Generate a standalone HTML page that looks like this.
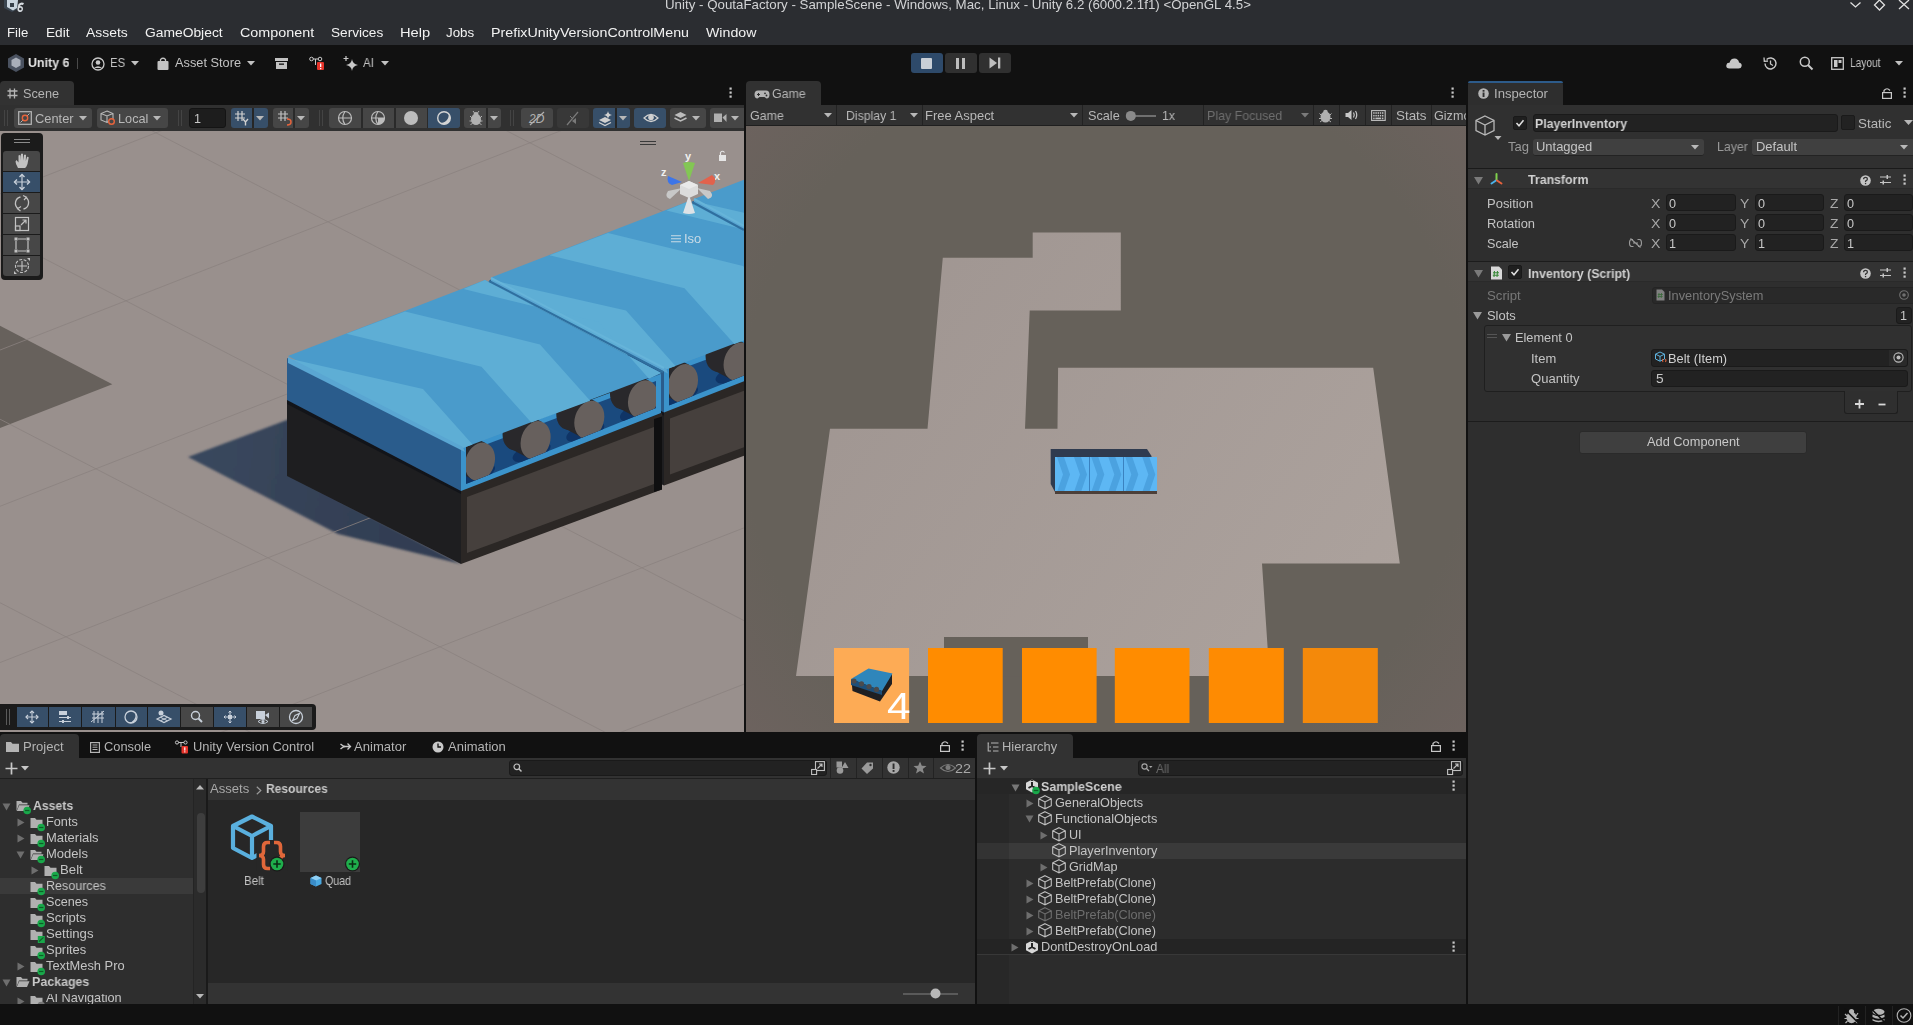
<!DOCTYPE html>
<html><head><meta charset="utf-8">
<style>
*{margin:0;padding:0;box-sizing:border-box}
html,body{width:1913px;height:1025px;overflow:hidden;background:#111;font-family:"Liberation Sans",sans-serif;font-size:12px;color:#c4c4c4}
.a{position:absolute}
.t{position:absolute;white-space:nowrap;line-height:1;transform-origin:0 0;will-change:transform}
svg.a{overflow:visible}
</style></head><body>
<div class="a" style="left:0px;top:0px;width:1913px;height:45px;background:#2b2d31;"></div>
<div class="t" style="left:665.14px;top:-2.00px;font-size:13.2px;color:#d2d3d5;transform:scaleX(1.009);">Unity - QoutaFactory - SampleScene - Windows, Mac, Linux - Unity 6.2 (6000.2.1f1) &lt;OpenGL 4.5&gt;</div>
<svg class="a" style="left:3px;top:0px;" width="22" height="14" viewBox="0 0 22 14"><path d="M1 0 L15 0 L15 9 L9 12 L1 8Z" fill="#3a4550"/><path d="M4 0 H15 L14 8 L10 10.5 L4 7Z" fill="#c9d5df"/><path d="M7 3 H11 V7 H7Z" fill="#37414b"/><path d="M15.5 4 Q18 1.5 21 3 L20 5 Q18 4 17 6 Q20 6 20 9 Q19.5 12.5 16.5 12 Q14 11.5 14.5 8Z" fill="#d8dde2"/><circle cx="17.3" cy="9" r="1.3" fill="#2b2d31"/></svg>
<div class="t" style="left:6.65px;top:26.00px;font-size:13px;color:#f2f2f2;transform:scaleX(1.013);">File</div>
<div class="t" style="left:45.65px;top:26.00px;font-size:13px;color:#f2f2f2;transform:scaleX(1.052);">Edit</div>
<div class="t" style="left:86.35px;top:26.00px;font-size:13px;color:#f2f2f2;transform:scaleX(1.069);">Assets</div>
<div class="t" style="left:144.65px;top:26.00px;font-size:13px;color:#f2f2f2;transform:scaleX(1.064);">GameObject</div>
<div class="t" style="left:239.55px;top:26.00px;font-size:13px;color:#f2f2f2;transform:scaleX(1.103);">Component</div>
<div class="t" style="left:330.55px;top:26.00px;font-size:13px;color:#f2f2f2;transform:scaleX(1.048);">Services</div>
<div class="t" style="left:399.55px;top:26.00px;font-size:13px;color:#f2f2f2;transform:scaleX(1.128);">Help</div>
<div class="t" style="left:445.55px;top:26.00px;font-size:13px;color:#f2f2f2;transform:scaleX(1.028);">Jobs</div>
<div class="t" style="left:490.65px;top:26.00px;font-size:13px;color:#f2f2f2;transform:scaleX(1.096);">PrefixUnityVersionControlMenu</div>
<div class="t" style="left:705.55px;top:26.00px;font-size:13px;color:#f2f2f2;transform:scaleX(1.090);">Window</div>
<svg class="a" style="left:1848px;top:0px;" width="65" height="12" viewBox="0 0 65 12"><path d="M2.5 2.5 L7.5 7 L12.5 2.5" stroke="#e0e0e0" stroke-width="1.3" fill="none"/><path d="M31.5 0 L36.5 5 L31.5 10 L26.5 5Z" stroke="#e0e0e0" stroke-width="1.3" fill="none"/><path d="M51 0 L61 9 M61 0 L51 9" stroke="#e0e0e0" stroke-width="1.3"/></svg>
<div class="a" style="left:0px;top:45px;width:1913px;height:36px;background:#111111;"></div>
<svg class="a" style="left:7px;top:53px;" width="18" height="20" viewBox="0 0 18 20"><path d="M9 1 L17 5.5 L17 14.5 L9 19 L1 14.5 L1 5.5Z" fill="#4a5260"/><path d="M9 4.5 L13.5 7 L13.5 12.5 L9 15 L4.5 12.5 L4.5 7Z" fill="#a9afba"/></svg>
<div class="t" style="left:27.57px;top:57.00px;font-size:12.6px;color:#e4e4e4;font-weight:700;transform:scaleX(0.987);">Unity 6</div>
<div class="a" style="left:77px;top:58px;width:1px;height:11px;background:#4a4a4a;"></div>
<svg class="a" style="left:91px;top:57px;" width="14" height="14" viewBox="0 0 14 14"><circle cx="7" cy="7" r="6" stroke="#c8c8c8" stroke-width="1.3" fill="none"/><circle cx="7" cy="5.5" r="2.3" fill="#c8c8c8"/><path d="M3 11 Q7 7.5 11 11" fill="#c8c8c8"/></svg>
<div class="t" style="left:109.77px;top:57.00px;font-size:12.6px;color:#c2c2c2;transform:scaleX(0.900);">ES</div>
<svg class="a" style="left:131px;top:61px;" width="8" height="5" viewBox="0 0 8 5"><path d="M0 0 L8 0 L4 4.5Z" fill="#c2c2c2"/></svg>
<svg class="a" style="left:157px;top:57px;" width="12" height="13" viewBox="0 0 12 13"><rect x="0.5" y="4" width="11" height="9" rx="1" fill="#c2c2c2"/><path d="M3.5 5 V2.5 Q6 0 8.5 2.5 V5" stroke="#c2c2c2" stroke-width="1.3" fill="none"/></svg>
<div class="t" style="left:174.57px;top:57.00px;font-size:12.6px;color:#c2c2c2;transform:scaleX(1.015);">Asset Store</div>
<svg class="a" style="left:247px;top:61px;" width="8" height="5" viewBox="0 0 8 5"><path d="M0 0 L8 0 L4 4.5Z" fill="#c2c2c2"/></svg>
<svg class="a" style="left:275px;top:58px;" width="13" height="11" viewBox="0 0 13 11"><rect x="0" y="0" width="13" height="3" fill="#c2c2c2"/><path d="M1 4 H12 V11 H1Z" fill="#c2c2c2"/><rect x="4" y="5.5" width="5" height="1.3" fill="#111"/></svg>
<svg class="a" style="left:309px;top:56px;" width="16" height="14" viewBox="0 0 16 14"><circle cx="2.5" cy="3" r="1.8" stroke="#c8c8c8" fill="none"/><circle cx="11" cy="3" r="1.8" stroke="#c8c8c8" fill="none"/><path d="M4 3 H9.5 M6.5 3 V9" stroke="#c8c8c8"/><rect x="8" y="6" width="7" height="8" rx="1" fill="#e5332a"/><rect x="11" y="7.5" width="1.3" height="3.5" fill="#fff"/><rect x="11" y="12" width="1.3" height="1.2" fill="#fff"/></svg>
<svg class="a" style="left:343px;top:56px;" width="16" height="15" viewBox="0 0 16 15"><path d="M9 3 Q9.5 8 15 9 Q9.5 10 9 15 Q8.5 10 3 9 Q8.5 8 9 3Z" fill="#c8c8c8"/><path d="M3 0 V5 M0.5 2.5 H5.5" stroke="#c8c8c8" stroke-width="1.2"/></svg>
<div class="t" style="left:362.77px;top:57.00px;font-size:12.6px;color:#c2c2c2;transform:scaleX(0.921);">AI</div>
<svg class="a" style="left:381px;top:61px;" width="8" height="5" viewBox="0 0 8 5"><path d="M0 0 L8 0 L4 4.5Z" fill="#c2c2c2"/></svg>
<div class="a" style="left:911px;top:53px;width:32px;height:20px;background:#2e4a6a;border-radius:3px"></div>
<div class="a" style="left:945px;top:53px;width:32px;height:20px;background:#303030;border-radius:3px"></div>
<div class="a" style="left:979px;top:53px;width:32px;height:20px;background:#303030;border-radius:3px"></div>
<div class="a" style="left:921px;top:57.5px;width:11px;height:11px;background:#c9cfd6;border-radius:1px"></div>
<div class="a" style="left:956px;top:57.5px;width:3px;height:11px;background:#bdbdbd;"></div>
<div class="a" style="left:962px;top:57.5px;width:3px;height:11px;background:#bdbdbd;"></div>
<svg class="a" style="left:989px;top:57px;" width="12" height="12" viewBox="0 0 12 12"><path d="M0.5 0.5 L8 6 L0.5 11.5Z" fill="#bdbdbd"/><rect x="9" y="0.5" width="2.3" height="11" fill="#bdbdbd"/></svg>
<svg class="a" style="left:1726px;top:57px;" width="16" height="12" viewBox="0 0 16 12"><path d="M3.5 11.5 Q0 11.5 0.3 8.2 Q0.8 5.5 3.5 5.8 Q4.5 1.5 8.5 1.5 Q12.5 1.8 13 5.5 Q16 6 15.7 9 Q15.2 11.5 12.5 11.5Z" fill="#c8c8c8"/></svg>
<svg class="a" style="left:1762px;top:56px;" width="16" height="15" viewBox="0 0 16 15"><path d="M3 7.5 A5.5 5.5 0 1 0 4.6 3.6" stroke="#c8c8c8" stroke-width="1.4" fill="none"/><path d="M2 1.5 L2.3 5.3 L6 5" stroke="#c8c8c8" stroke-width="1.3" fill="none"/><path d="M8.5 4.5 V8 L11 9.5" stroke="#c8c8c8" stroke-width="1.3" fill="none"/></svg>
<svg class="a" style="left:1799px;top:56px;" width="15" height="15" viewBox="0 0 15 15"><circle cx="5.8" cy="5.8" r="4.5" stroke="#c8c8c8" stroke-width="1.5" fill="none"/><path d="M9 9 L13.5 13.5" stroke="#c8c8c8" stroke-width="2"/></svg>
<svg class="a" style="left:1831px;top:57px;" width="13" height="13" viewBox="0 0 13 13"><rect x="0.7" y="0.7" width="11.6" height="11.6" stroke="#c8c8c8" stroke-width="1.3" fill="none"/><rect x="3" y="3" width="3.5" height="7" fill="#c8c8c8"/><rect x="7.5" y="3" width="3" height="3" fill="#c8c8c8"/></svg>
<div class="t" style="left:1849.87px;top:57.00px;font-size:12.6px;color:#c2c2c2;transform:scaleX(0.807);">Layout</div>
<svg class="a" style="left:1895px;top:61px;" width="8" height="5" viewBox="0 0 8 5"><path d="M0 0 L8 0 L4 4.5Z" fill="#c2c2c2"/></svg>
<div class="a" style="left:0px;top:81px;width:1913px;height:923px;background:#111111;"></div>
<div class="a" style="left:0px;top:1004px;width:1913px;height:21px;background:#111111;"></div>
<div class="a" style="left:0px;top:81px;width:74px;height:24px;background:#323232;border-radius:4px 4px 0 0"></div>
<svg class="a" style="left:7px;top:88px;" width="11" height="11" viewBox="0 0 11 11"><path d="M3 0.5 V10.5 M7.5 0.5 V10.5 M0.5 3 H10.5 M0.5 7.5 H10.5" stroke="#b4b4b4" stroke-width="1.3"/></svg>
<div class="t" style="left:22.57px;top:88.00px;font-size:12.6px;color:#b4b4b4;transform:scaleX(1.010);">Scene</div>
<svg class="a" style="left:729px;top:87px;" width="4" height="12" viewBox="0 0 4 12"><rect x="0.5" y="0.5" width="2.2" height="2.2" fill="#c8c8c8"/><rect x="0.5" y="4.5" width="2.2" height="2.2" fill="#c8c8c8"/><rect x="0.5" y="8.5" width="2.2" height="2.2" fill="#c8c8c8"/></svg>
<div class="a" style="left:0px;top:105px;width:744px;height:26px;background:#303030;"></div>
<div class="a" style="left:4px;top:110px;width:1px;height:16px;background:#444;"></div>
<div class="a" style="left:7px;top:110px;width:1px;height:16px;background:#444;"></div>
<div class="a" style="left:14px;top:108px;width:78px;height:20px;background:#464646;border-radius:3px"></div>
<svg class="a" style="left:18px;top:111px;" width="14" height="14" viewBox="0 0 14 14"><rect x="0.7" y="0.7" width="12.6" height="12.6" stroke="#b8b8b8" stroke-width="1.2" fill="none"/><path d="M2.5 11.5 L11.5 2.5" stroke="#b8b8b8" stroke-width="1"/><circle cx="7" cy="7" r="2.7" stroke="#e8643c" stroke-width="1.4" fill="#464646"/></svg>
<div class="t" style="left:34.87px;top:113.00px;font-size:12.6px;color:#b8b8b8;transform:scaleX(1.020);">Center</div>
<svg class="a" style="left:79px;top:116px;" width="8" height="5" viewBox="0 0 8 5"><path d="M0 0 L8 0 L4 4.5Z" fill="#b8b8b8"/></svg>
<div class="a" style="left:97px;top:108px;width:71px;height:20px;background:#464646;border-radius:3px"></div>
<svg class="a" style="left:100px;top:110px;" width="16" height="16" viewBox="0 0 16 16"><path d="M7 1 L13 3.5 L13 10 L7 12.5 L1 10 L1 3.5Z M1 3.5 L7 6 L13 3.5 M7 6 V12.5" stroke="#b8b8b8" stroke-width="1.1" fill="none"/><circle cx="11.5" cy="11.5" r="2.8" stroke="#e8643c" stroke-width="1.4" fill="#464646"/></svg>
<div class="t" style="left:117.67px;top:113.00px;font-size:12.6px;color:#b8b8b8;transform:scaleX(1.009);">Local</div>
<svg class="a" style="left:153px;top:116px;" width="8" height="5" viewBox="0 0 8 5"><path d="M0 0 L8 0 L4 4.5Z" fill="#b8b8b8"/></svg>
<div class="a" style="left:178px;top:110px;width:1px;height:16px;background:#444;"></div>
<div class="a" style="left:181px;top:110px;width:1px;height:16px;background:#444;"></div>
<div class="a" style="left:189px;top:108px;width:37px;height:20px;background:#1d1d1d;border-radius:3px;border:1px solid #141414"></div>
<div class="t" style="left:193.87px;top:113.00px;font-size:12.6px;color:#c8c8c8;">1</div>
<div class="a" style="left:231px;top:108px;width:37px;height:20px;background:#374f69;border-radius:3px"></div>
<div class="a" style="left:252px;top:108px;width:1.5px;height:20px;background:#262626;"></div>
<svg class="a" style="left:234px;top:110px;" width="16" height="16" viewBox="0 0 16 16"><path d="M4 1 V11 M8 1 V11 M1 4 H11 M1 8 H11" stroke="#d0d0d0" stroke-width="1.2"/><path d="M9 9 L11.5 12 L14 9 M11.5 12 V15.5" stroke="#d0d0d0" stroke-width="1.4" fill="none"/></svg>
<svg class="a" style="left:256px;top:116px;" width="8" height="5" viewBox="0 0 8 5"><path d="M0 0 L8 0 L4 4.5Z" fill="#b8b8b8"/></svg>
<div class="a" style="left:273px;top:108px;width:36px;height:20px;background:#464646;border-radius:3px"></div>
<div class="a" style="left:293px;top:108px;width:1.5px;height:20px;background:#2a2a2a;"></div>
<svg class="a" style="left:277px;top:110px;" width="16" height="16" viewBox="0 0 16 16"><path d="M4 1 V11 M8 1 V11 M1 4 H11 M1 8 H11" stroke="#c0c0c0" stroke-width="1.2"/><path d="M10 9 Q14 9 14 12 Q14 15 10 15" stroke="#e8643c" stroke-width="1.5" fill="none"/></svg>
<svg class="a" style="left:297px;top:116px;" width="8" height="5" viewBox="0 0 8 5"><path d="M0 0 L8 0 L4 4.5Z" fill="#b8b8b8"/></svg>
<div class="a" style="left:319px;top:110px;width:1px;height:16px;background:#444;"></div>
<div class="a" style="left:322px;top:110px;width:1px;height:16px;background:#444;"></div>
<div class="a" style="left:329px;top:108px;width:131px;height:20px;background:#464646;border-radius:3px"></div>
<div class="a" style="left:361px;top:108px;width:1.5px;height:20px;background:#2a2a2a;"></div>
<div class="a" style="left:394px;top:108px;width:1.5px;height:20px;background:#2a2a2a;"></div>
<div class="a" style="left:427px;top:108px;width:1.5px;height:20px;background:#2a2a2a;"></div>
<div class="a" style="left:428px;top:108px;width:32px;height:20px;background:#374f69;border-radius:0 3px 3px 0"></div>
<svg class="a" style="left:337px;top:110px;" width="16" height="16" viewBox="0 0 16 16"><circle cx="8" cy="8" r="6.5" stroke="#bcbcbc" stroke-width="1.2" fill="none"/><path d="M1.5 8 H14.5 M8 1.5 Q3.5 8 8 14.5" stroke="#bcbcbc" stroke-width="1.2" fill="none"/></svg>
<svg class="a" style="left:370px;top:110px;" width="16" height="16" viewBox="0 0 16 16"><circle cx="8" cy="8" r="6.5" stroke="#bcbcbc" stroke-width="1.2" fill="none"/><path d="M14.5 8 A6.5 6.5 0 0 1 8 14.5 Q11 11 11 8Z" fill="#bcbcbc"/><path d="M8 14.5 A6.5 6.5 0 0 0 14.5 8 H8Z" fill="#bcbcbc"/><path d="M1.5 8 H14.5 M8 1.5 Q3.5 8 8 14.5" stroke="#bcbcbc" stroke-width="1.2" fill="none"/></svg>
<svg class="a" style="left:403px;top:110px;" width="16" height="16" viewBox="0 0 16 16"><circle cx="8" cy="8" r="7" fill="#bcbcbc"/></svg>
<svg class="a" style="left:436px;top:110px;" width="16" height="16" viewBox="0 0 16 16"><circle cx="8" cy="8" r="6.3" stroke="#d4d4d4" stroke-width="1.4" fill="none"/><path d="M12.5 3.5 A6.3 6.3 0 0 1 3.5 12.5 A7.5 7.5 0 0 0 12.5 3.5Z" fill="#d4d4d4"/></svg>
<div class="a" style="left:464px;top:108px;width:37px;height:20px;background:#464646;border-radius:3px"></div>
<div class="a" style="left:486px;top:108px;width:1.5px;height:20px;background:#2a2a2a;"></div>
<svg class="a" style="left:468px;top:110px;" width="16" height="16" viewBox="0 0 16 16"><ellipse cx="8" cy="9.5" rx="5" ry="5.5" fill="#b0b0b0"/><circle cx="8" cy="4.5" r="2.5" fill="#b0b0b0"/><path d="M2 6 L4 8 M14 6 L12 8 M1.5 11 H4 M14.5 11 H12 M2.5 15 L4.5 13 M13.5 15 L11.5 13 M5 1 L6.5 3 M11 1 L9.5 3" stroke="#b0b0b0" stroke-width="1"/></svg>
<svg class="a" style="left:490px;top:116px;" width="8" height="5" viewBox="0 0 8 5"><path d="M0 0 L8 0 L4 4.5Z" fill="#b8b8b8"/></svg>
<div class="a" style="left:510px;top:110px;width:1px;height:16px;background:#444;"></div>
<div class="a" style="left:513px;top:110px;width:1px;height:16px;background:#444;"></div>
<div class="a" style="left:521px;top:108px;width:32px;height:20px;background:#464646;border-radius:3px"></div>
<svg class="a" style="left:527px;top:110px;" width="20" height="16" viewBox="0 0 20 16"><text x="2" y="13" font-size="12" font-family="Liberation Sans" fill="#b0b0b0" font-style="italic">2D</text><path d="M3 15 L17 2" stroke="#b0b0b0" stroke-width="1.2"/></svg>
<div class="a" style="left:557px;top:108px;width:32px;height:20px;background:#383838;border-radius:3px"></div>
<svg class="a" style="left:565px;top:110px;" width="16" height="16" viewBox="0 0 16 16"><path d="M2 15 L13 2" stroke="#7a7a7a" stroke-width="1.2"/><path d="M11 8 L7 11 L11 14Z" fill="#7a7a7a"/><path d="M5 6 L8 9" stroke="#7a7a7a"/></svg>
<div class="a" style="left:593px;top:108px;width:37px;height:20px;background:#374f69;border-radius:3px"></div>
<div class="a" style="left:615px;top:108px;width:1.5px;height:20px;background:#262626;"></div>
<svg class="a" style="left:598px;top:110px;" width="16" height="16" viewBox="0 0 16 16"><path d="M1 10 L7 7 L13 10 L7 13Z" fill="#d0d0d0"/><path d="M1 12.5 L7 15.5 L13 12.5" stroke="#d0d0d0" stroke-width="1.3" fill="none"/><path d="M10 1 Q10.5 4.5 14 5 Q10.5 5.5 10 9 Q9.5 5.5 6 5 Q9.5 4.5 10 1Z" fill="#d0d0d0"/></svg>
<svg class="a" style="left:619px;top:116px;" width="8" height="5" viewBox="0 0 8 5"><path d="M0 0 L8 0 L4 4.5Z" fill="#b8b8b8"/></svg>
<div class="a" style="left:634px;top:108px;width:32px;height:20px;background:#374f69;border-radius:3px"></div>
<svg class="a" style="left:643px;top:112px;" width="16" height="12" viewBox="0 0 16 12"><path d="M1 6 Q8 -1 15 6 Q8 13 1 6Z" stroke="#d0d0d0" stroke-width="1.2" fill="none"/><circle cx="8" cy="5.5" r="2.8" fill="#d0d0d0"/></svg>
<div class="a" style="left:670px;top:108px;width:36px;height:20px;background:#464646;border-radius:3px"></div>
<svg class="a" style="left:674px;top:111px;" width="13" height="12" viewBox="0 0 13 12"><path d="M0.5 4 L6.5 1 L12.5 4 L6.5 7Z" fill="#bcbcbc"/><path d="M0.5 7 L6.5 10 L12.5 7" stroke="#bcbcbc" stroke-width="1.5" fill="none"/></svg>
<svg class="a" style="left:692px;top:116px;" width="8" height="5" viewBox="0 0 8 5"><path d="M0 0 L8 0 L4 4.5Z" fill="#b8b8b8"/></svg>
<div class="a" style="left:710px;top:108px;width:34px;height:20px;background:#464646;border-radius:3px 0 0 3px"></div>
<svg class="a" style="left:714px;top:113px;" width="13" height="10" viewBox="0 0 13 10"><rect x="0" y="0.5" width="8" height="8.5" fill="#b0b0b0"/><path d="M8.5 4.5 L12.5 1 V9Z" fill="#b0b0b0"/></svg>
<svg class="a" style="left:731px;top:116px;" width="8" height="5" viewBox="0 0 8 5"><path d="M0 0 L8 0 L4 4.5Z" fill="#b8b8b8"/></svg>
<svg class="a" style="left:0;top:131px;overflow:hidden" width="744" height="601" viewBox="0 131 744 601"><rect x="0" y="131" width="744" height="601" fill="#99908d"/><polygon points="0.0,325.7 112.3,384.2 0.0,427.9" fill="#67615c"/><defs><filter id="shb" x="-5%" y="-5%" width="110%" height="110%"><feGaussianBlur stdDeviation="0.9"/></filter><linearGradient id="shg" x1="188" y1="457" x2="400" y2="480" gradientUnits="userSpaceOnUse"><stop offset="0" stop-color="#3a485e"/><stop offset="1" stop-color="#323e53"/></linearGradient></defs><polygon points="188.0,457.0 300.0,415.0 300.0,480.0 461.0,564.0 338.0,534.0" fill="url(#shg)" filter="url(#shb)"/><path d="M-2118.1,240.8 L305.9,-707.2 M-1946.1,329.8 L477.9,-618.2 M-1774.1,418.8 L649.9,-529.2 M-1602.1,507.8 L821.9,-440.2 M-1430.1,596.8 L993.9,-351.2 M-1258.1,685.8 L1165.9,-262.2 M-1086.1,774.8 L1337.9,-173.2 M-914.1,863.8 L1509.9,-84.2 M-742.1,952.8 L1681.9,4.8 M-570.1,1041.8 L1853.9,93.8 M-398.1,1130.8 L2025.9,182.8 M-226.1,1219.8 L2197.9,271.8 M-54.1,1308.8 L2369.9,360.8 M117.9,1397.8 L2541.9,449.8 M-2118.1,240.8 L-54.1,1308.8 M-1916.1,161.8 L147.9,1229.8 M-1714.1,82.8 L349.9,1150.8 M-1512.1,3.8 L551.9,1071.8 M-1310.1,-75.2 L753.9,992.8 M-1108.1,-154.2 L955.9,913.8 M-906.1,-233.2 L1157.9,834.8 M-704.1,-312.2 L1359.9,755.8 M-502.1,-391.2 L1561.9,676.8 M-300.1,-470.2 L1763.9,597.8 M-98.1,-549.2 L1965.9,518.8 M103.9,-628.2 L2167.9,439.8 M305.9,-707.2 L2369.9,360.8 M507.9,-786.2 L2571.9,281.8" stroke="#8a827f" stroke-width="0.8" fill="none"/><polygon points="693.0,240.0 867.0,330.0 867.0,407.0 693.0,319.0" fill="#1e1e20"/><polygon points="693.0,242.0 867.0,332.0 867.0,337.0 693.0,247.0" fill="#121419"/><polygon points="867.0,332.0 1068.0,256.0 1068.0,332.5 867.0,407.0" fill="#2b2725"/><polygon points="873.0,340.0 1060.0,270.0 1060.0,327.0 873.0,396.0" fill="#46403d"/><polygon points="1060.0,262.0 1068.0,259.6 1068.0,332.5 1060.0,335.0" fill="#0f0f10"/><polygon points="693.0,201.0 871.0,289.0 867.0,334.0 693.0,243.0" fill="#2a5c8c"/><polygon points="867.0,291.0 1067.0,217.0 1067.0,256.0 867.0,334.0" fill="#3b93cb"/><polygon points="872.0,295.0 1062.0,224.0 1062.0,251.0 872.0,327.0" fill="#1a4a7e"/><clipPath id="clip406"><polygon points="872.0,283.0 1062.0,212.0 1062.0,251.0 872.0,327.0"/></clipPath><g clip-path="url(#clip406)"><ellipse cx="882.0" cy="316.7" rx="20" ry="8" transform="rotate(-20 882.0 316.7)" fill="#0f3466"/><polygon points="892.0,286.2 874.0,277.2 862.0,313.7 880.0,323.2" fill="#29282b"/><ellipse cx="868.0" cy="295.7" rx="14.5" ry="19.5" transform="rotate(18 868.0 295.7)" fill="#29282b"/><ellipse cx="886.0" cy="304.7" rx="14.5" ry="19.5" transform="rotate(18 886.0 304.7)" fill="#67605d"/><ellipse cx="937.6" cy="295.2" rx="20" ry="8" transform="rotate(-20 937.6 295.2)" fill="#0f3466"/><polygon points="947.6,264.7 929.6,255.7 917.6,292.2 935.6,301.7" fill="#29282b"/><ellipse cx="923.6" cy="274.2" rx="14.5" ry="19.5" transform="rotate(18 923.6 274.2)" fill="#29282b"/><ellipse cx="941.6" cy="283.2" rx="14.5" ry="19.5" transform="rotate(18 941.6 283.2)" fill="#67605d"/><ellipse cx="991.3" cy="274.8" rx="20" ry="8" transform="rotate(-20 991.3 274.8)" fill="#0f3466"/><polygon points="1001.3,244.3 983.3,235.3 971.3,271.8 989.3,281.3" fill="#29282b"/><ellipse cx="977.3" cy="253.8" rx="14.5" ry="19.5" transform="rotate(18 977.3 253.8)" fill="#29282b"/><ellipse cx="995.3" cy="262.8" rx="14.5" ry="19.5" transform="rotate(18 995.3 262.8)" fill="#67605d"/><ellipse cx="1045.0" cy="254.3" rx="20" ry="8" transform="rotate(-20 1045.0 254.3)" fill="#0f3466"/><polygon points="1055.0,223.8 1037.0,214.8 1025.0,251.3 1043.0,260.8" fill="#29282b"/><ellipse cx="1031.0" cy="233.3" rx="14.5" ry="19.5" transform="rotate(18 1031.0 233.3)" fill="#29282b"/><ellipse cx="1049.0" cy="242.3" rx="14.5" ry="19.5" transform="rotate(18 1049.0 242.3)" fill="#67605d"/></g><polygon points="694.0,199.0 891.0,123.0 1067.0,216.0 869.0,291.0" fill="#4a9bcb"/><polygon points="694.0,201.0 869.0,291.0 878.5,287.5 829.0,232.0 697.0,202.0" fill="#5eaed5"/><polygon points="752.5,176.7 887.5,209.7 937.3,265.6 996.2,243.7 946.0,187.4 811.0,154.4" fill="#5eaed5"/><polygon points="869.5,132.1 1004.5,165.1 1055.0,221.8 1067.0,216.0 891.0,123.0" fill="#5eaed5"/><polygon points="694.0,200.0 869.0,290.0 871.0,295.0 694.0,206.0" fill="#5aa6d2"/><polygon points="490.0,318.5 664.0,408.5 664.0,485.5 490.0,397.5" fill="#1e1e20"/><polygon points="490.0,320.5 664.0,410.5 664.0,415.5 490.0,325.5" fill="#121419"/><polygon points="664.0,410.5 865.0,334.5 865.0,411.0 664.0,485.5" fill="#2b2725"/><polygon points="670.0,418.5 857.0,348.5 857.0,405.5 670.0,474.5" fill="#46403d"/><polygon points="857.0,340.5 865.0,338.1 865.0,411.0 857.0,413.5" fill="#0f0f10"/><polygon points="490.0,279.5 668.0,367.5 664.0,412.5 490.0,321.5" fill="#2a5c8c"/><polygon points="664.0,369.5 864.0,295.5 864.0,334.5 664.0,412.5" fill="#3b93cb"/><polygon points="669.0,373.5 859.0,302.5 859.0,329.5 669.0,405.5" fill="#1a4a7e"/><clipPath id="clip203"><polygon points="669.0,361.5 859.0,290.5 859.0,329.5 669.0,405.5"/></clipPath><g clip-path="url(#clip203)"><ellipse cx="679.0" cy="395.2" rx="20" ry="8" transform="rotate(-20 679.0 395.2)" fill="#0f3466"/><polygon points="689.0,364.7 671.0,355.7 659.0,392.2 677.0,401.7" fill="#29282b"/><ellipse cx="665.0" cy="374.2" rx="14.5" ry="19.5" transform="rotate(18 665.0 374.2)" fill="#29282b"/><ellipse cx="683.0" cy="383.2" rx="14.5" ry="19.5" transform="rotate(18 683.0 383.2)" fill="#67605d"/><ellipse cx="734.6" cy="373.7" rx="20" ry="8" transform="rotate(-20 734.6 373.7)" fill="#0f3466"/><polygon points="744.6,343.2 726.6,334.2 714.6,370.7 732.6,380.2" fill="#29282b"/><ellipse cx="720.6" cy="352.7" rx="14.5" ry="19.5" transform="rotate(18 720.6 352.7)" fill="#29282b"/><ellipse cx="738.6" cy="361.7" rx="14.5" ry="19.5" transform="rotate(18 738.6 361.7)" fill="#67605d"/><ellipse cx="788.3" cy="353.3" rx="20" ry="8" transform="rotate(-20 788.3 353.3)" fill="#0f3466"/><polygon points="798.3,322.8 780.3,313.8 768.3,350.3 786.3,359.8" fill="#29282b"/><ellipse cx="774.3" cy="332.3" rx="14.5" ry="19.5" transform="rotate(18 774.3 332.3)" fill="#29282b"/><ellipse cx="792.3" cy="341.3" rx="14.5" ry="19.5" transform="rotate(18 792.3 341.3)" fill="#67605d"/><ellipse cx="842.0" cy="332.8" rx="20" ry="8" transform="rotate(-20 842.0 332.8)" fill="#0f3466"/><polygon points="852.0,302.3 834.0,293.3 822.0,329.8 840.0,339.3" fill="#29282b"/><ellipse cx="828.0" cy="311.8" rx="14.5" ry="19.5" transform="rotate(18 828.0 311.8)" fill="#29282b"/><ellipse cx="846.0" cy="320.8" rx="14.5" ry="19.5" transform="rotate(18 846.0 320.8)" fill="#67605d"/></g><polygon points="491.0,277.5 688.0,201.5 864.0,294.5 666.0,369.5" fill="#4a9bcb"/><polygon points="491.0,279.5 666.0,369.5 675.5,366.0 626.0,310.5 494.0,280.5" fill="#5eaed5"/><polygon points="549.5,255.2 684.5,288.2 734.3,344.1 793.2,322.2 743.0,265.9 608.0,232.9" fill="#5eaed5"/><polygon points="666.5,210.6 801.5,243.6 852.0,300.3 864.0,294.5 688.0,201.5" fill="#5eaed5"/><polygon points="491.0,278.5 666.0,368.5 668.0,373.5 491.0,284.5" fill="#5aa6d2"/><polygon points="287.0,397.0 461.0,487.0 461.0,564.0 287.0,476.0" fill="#1e1e20"/><polygon points="287.0,399.0 461.0,489.0 461.0,494.0 287.0,404.0" fill="#121419"/><polygon points="461.0,489.0 662.0,413.0 662.0,489.5 461.0,564.0" fill="#2b2725"/><polygon points="467.0,497.0 654.0,427.0 654.0,484.0 467.0,553.0" fill="#46403d"/><polygon points="654.0,419.0 662.0,416.6 662.0,489.5 654.0,492.0" fill="#0f0f10"/><polygon points="287.0,358.0 465.0,446.0 461.0,491.0 287.0,400.0" fill="#2a5c8c"/><polygon points="461.0,448.0 661.0,374.0 661.0,413.0 461.0,491.0" fill="#3b93cb"/><polygon points="466.0,452.0 656.0,381.0 656.0,408.0 466.0,484.0" fill="#1a4a7e"/><clipPath id="clip0"><polygon points="466.0,440.0 656.0,369.0 656.0,408.0 466.0,484.0"/></clipPath><g clip-path="url(#clip0)"><ellipse cx="476.0" cy="473.7" rx="20" ry="8" transform="rotate(-20 476.0 473.7)" fill="#0f3466"/><polygon points="486.0,443.2 468.0,434.2 456.0,470.7 474.0,480.2" fill="#29282b"/><ellipse cx="462.0" cy="452.7" rx="14.5" ry="19.5" transform="rotate(18 462.0 452.7)" fill="#29282b"/><ellipse cx="480.0" cy="461.7" rx="14.5" ry="19.5" transform="rotate(18 480.0 461.7)" fill="#67605d"/><ellipse cx="531.6" cy="452.2" rx="20" ry="8" transform="rotate(-20 531.6 452.2)" fill="#0f3466"/><polygon points="541.6,421.7 523.6,412.7 511.6,449.2 529.6,458.7" fill="#29282b"/><ellipse cx="517.6" cy="431.2" rx="14.5" ry="19.5" transform="rotate(18 517.6 431.2)" fill="#29282b"/><ellipse cx="535.6" cy="440.2" rx="14.5" ry="19.5" transform="rotate(18 535.6 440.2)" fill="#67605d"/><ellipse cx="585.3" cy="431.8" rx="20" ry="8" transform="rotate(-20 585.3 431.8)" fill="#0f3466"/><polygon points="595.3,401.3 577.3,392.3 565.3,428.8 583.3,438.3" fill="#29282b"/><ellipse cx="571.3" cy="410.8" rx="14.5" ry="19.5" transform="rotate(18 571.3 410.8)" fill="#29282b"/><ellipse cx="589.3" cy="419.8" rx="14.5" ry="19.5" transform="rotate(18 589.3 419.8)" fill="#67605d"/><ellipse cx="639.0" cy="411.3" rx="20" ry="8" transform="rotate(-20 639.0 411.3)" fill="#0f3466"/><polygon points="649.0,380.8 631.0,371.8 619.0,408.3 637.0,417.8" fill="#29282b"/><ellipse cx="625.0" cy="390.3" rx="14.5" ry="19.5" transform="rotate(18 625.0 390.3)" fill="#29282b"/><ellipse cx="643.0" cy="399.3" rx="14.5" ry="19.5" transform="rotate(18 643.0 399.3)" fill="#67605d"/></g><polygon points="288.0,356.0 485.0,280.0 661.0,373.0 463.0,448.0" fill="#4a9bcb"/><polygon points="288.0,358.0 463.0,448.0 472.5,444.5 423.0,389.0 291.0,359.0" fill="#5eaed5"/><polygon points="346.5,333.7 481.5,366.7 531.3,422.6 590.2,400.7 540.0,344.4 405.0,311.4" fill="#5eaed5"/><polygon points="463.5,289.1 598.5,322.1 649.0,378.8 661.0,373.0 485.0,280.0" fill="#5eaed5"/><polygon points="288.0,357.0 463.0,447.0 465.0,452.0 288.0,363.0" fill="#5aa6d2"/><path d="M489,281 L663,372 M692,202 L744,230" stroke="#2f6f9f" stroke-width="2" fill="none"/><path d="M491,278 L664,368 M694,199 L744,226" stroke="#66b4d9" stroke-width="2" fill="none"/></svg>
<div class="a" style="left:1px;top:133px;width:42px;height:147px;background:#1b1b1b;border-radius:4px"></div>
<div class="a" style="left:14px;top:139px;width:16px;height:1px;background:#8a8a8a;"></div>
<div class="a" style="left:14px;top:142px;width:16px;height:1px;background:#8a8a8a;"></div>
<div class="a" style="left:3px;top:151px;width:37px;height:20px;background:#474747;border-radius:3px 3px 0 0"></div>
<div class="a" style="left:3px;top:172px;width:37px;height:20px;background:#374f69;"></div>
<div class="a" style="left:3px;top:193px;width:37px;height:20px;background:#474747;"></div>
<div class="a" style="left:3px;top:214px;width:37px;height:20px;background:#474747;"></div>
<div class="a" style="left:3px;top:235px;width:37px;height:20px;background:#474747;"></div>
<div class="a" style="left:3px;top:256px;width:37px;height:20px;background:#474747;border-radius:0 0 3px 3px"></div>
<svg class="a" style="left:13px;top:152px;" width="18" height="18" viewBox="0 0 18 18"><path d="M5 16 Q2.5 12 2.5 9.5 L3.5 8 L5.5 10.5 L5.5 3.5 Q6.5 2.5 7.5 3.5 L7.5 8.5 L8 2 Q9 1 10 2 L10 8.5 L11 3 Q12 2 13 3 L12.8 9 L14 5 Q15 4.5 15.7 5.5 L14.5 12 Q13.5 15 12 16Z" fill="#c2c2c2"/></svg>
<svg class="a" style="left:13px;top:173px;" width="18" height="18" viewBox="0 0 18 18"><path d="M9 1.5 V16.5 M1.5 9 H16.5" stroke="#c8d0da" stroke-width="1.2"/><path d="M6.5 4 L9 1.5 L11.5 4 M6.5 14 L9 16.5 L11.5 14 M4 6.5 L1.5 9 L4 11.5 M14 6.5 L16.5 9 L14 11.5" stroke="#c8d0da" stroke-width="1.4" fill="none"/></svg>
<svg class="a" style="left:13px;top:194px;" width="18" height="18" viewBox="0 0 18 18"><path d="M7.5 3 A6.5 6.5 0 0 0 5 14.5 M10.5 15 A6.5 6.5 0 0 0 13 3.5" stroke="#c2c2c2" stroke-width="1.3" fill="none"/><path d="M10 1.5 L13.5 3.2 L11 6 M8 12.5 L4.5 14.8 L7.5 17" stroke="#c2c2c2" stroke-width="1.2" fill="none"/></svg>
<svg class="a" style="left:13px;top:215px;" width="18" height="18" viewBox="0 0 18 18"><rect x="2.5" y="2.5" width="13" height="13" stroke="#c2c2c2" stroke-width="1.2" fill="none"/><rect x="2.5" y="11" width="4.5" height="4.5" stroke="#c2c2c2" stroke-width="1.2" fill="none"/><path d="M8 10 L13 5 M9.5 5 H13 V8.5" stroke="#c2c2c2" stroke-width="1.2" fill="none"/></svg>
<svg class="a" style="left:13px;top:236px;" width="18" height="18" viewBox="0 0 18 18"><path d="M5 3 H13 M5 15 H13 M3 5 V13 M15 5 V13" stroke="#c2c2c2" stroke-width="1.2"/><rect x="1.5" y="1.5" width="3" height="3" fill="#c2c2c2"/><rect x="13.5" y="1.5" width="3" height="3" fill="#c2c2c2"/><rect x="1.5" y="13.5" width="3" height="3" fill="#c2c2c2"/><rect x="13.5" y="13.5" width="3" height="3" fill="#c2c2c2"/></svg>
<svg class="a" style="left:13px;top:257px;" width="18" height="18" viewBox="0 0 18 18"><circle cx="9" cy="9" r="6.5" stroke="#c2c2c2" stroke-width="1.1" fill="none" stroke-dasharray="3 1.5"/><path d="M9 4 V14 M4 9 H14" stroke="#c2c2c2" stroke-width="1.1"/><path d="M1 17 L4 17 L1 14Z M17 1 L14 1 L17 4Z" fill="#c2c2c2"/></svg>
<div class="a" style="left:640px;top:141px;width:16px;height:1px;background:#3a3a3a;"></div>
<div class="a" style="left:640px;top:144px;width:16px;height:1px;background:#3a3a3a;"></div>
<svg class="a" style="left:655px;top:146px;" width="75" height="72" viewBox="0 0 75 72">
<text x="30" y="14" font-size="11" font-weight="700" fill="#f0f0f0" font-family="Liberation Sans">y</text>
<text x="6" y="30" font-size="11" font-weight="700" fill="#f0f0f0" font-family="Liberation Sans">z</text>
<text x="59" y="34" font-size="11" font-weight="700" fill="#f0f0f0" font-family="Liberation Sans">x</text>
<path d="M28 17 Q34 15 40 17 L34 35Z" fill="#83c654"/>
<path d="M13 30 Q11 37 17 39 L27 36Z" fill="#3d75e8"/>
<path d="M57 29 Q63 34 58 39 L43 37Z" fill="#e2624c"/>
<path d="M13 45 Q9 51 15 53 L27 42Z" fill="#c8c8c8"/>
<path d="M55 45 Q60 51 53 53 L42 42Z" fill="#c8c8c8"/>
<path d="M28 67 Q34 69 40 67 L34 49Z" fill="#dde2e6"/>
<path d="M34 35 L43 39 L43 48 L34 52 L25 48 L25 39Z" fill="#dcdcdc"/>
<path d="M34 35 L43 39 L34 43 L25 39Z" fill="#e9e9e9"/>
<rect x="64" y="9" width="7" height="6" fill="#e6e6e6"/><path d="M65.5 9 V6.5 Q67.5 4 69.5 6.5" stroke="#e6e6e6" stroke-width="1.2" fill="none"/>
</svg>
<svg class="a" style="left:671px;top:235px;" width="11" height="8" viewBox="0 0 11 8"><path d="M0 0.7 H10 M0 3.7 H10 M0 6.7 H10" stroke="#c9dbe6" stroke-width="1.1"/></svg>
<div class="t" style="left:684.37px;top:233.00px;font-size:12.6px;color:#c9dbe6;transform:scaleX(1.029);">Iso</div>
<div class="a" style="left:0px;top:704px;width:316px;height:26px;background:#1b1b1b;border-radius:0 4px 4px 0"></div>
<div class="a" style="left:6px;top:709px;width:1px;height:16px;background:#5a5a5a;"></div>
<div class="a" style="left:9px;top:709px;width:1px;height:16px;background:#5a5a5a;"></div>
<div class="a" style="left:16.5px;top:707px;width:31.5px;height:20px;background:#374f69;"></div>
<div class="a" style="left:49px;top:707px;width:32px;height:20px;background:#374f69;"></div>
<div class="a" style="left:82px;top:707px;width:32.5px;height:20px;background:#374f69;"></div>
<div class="a" style="left:115.5px;top:707px;width:31.5px;height:20px;background:#374f69;"></div>
<div class="a" style="left:148px;top:707px;width:31.5px;height:20px;background:#374f69;"></div>
<div class="a" style="left:181px;top:707px;width:32px;height:20px;background:#474747;"></div>
<div class="a" style="left:214px;top:707px;width:32px;height:20px;background:#374f69;"></div>
<div class="a" style="left:247px;top:707px;width:32px;height:20px;background:#474747;"></div>
<div class="a" style="left:280px;top:707px;width:32px;height:20px;background:#474747;"></div>
<svg class="a" style="left:23px;top:709px;" width="18" height="16" viewBox="0 0 18 16"><path d="M9 2 V14 M3 8 H15" stroke="#c8d0da" stroke-width="1.1"/><path d="M7 4 L9 2 L11 4 M7 12 L9 14 L11 12 M5 6 L3 8 L5 10 M13 6 L15 8 L13 10" stroke="#c8d0da" stroke-width="1.2" fill="none"/></svg>
<svg class="a" style="left:56px;top:709px;" width="18" height="16" viewBox="0 0 18 16"><rect x="3" y="2" width="8" height="4" fill="#c8d0da"/><path d="M3 8.5 H15 M3 12.5 H15" stroke="#c8d0da" stroke-width="1.2"/><rect x="11" y="7" width="2" height="3" fill="#c8d0da"/><rect x="6" y="11" width="2" height="3" fill="#c8d0da"/></svg>
<svg class="a" style="left:89px;top:709px;" width="18" height="16" viewBox="0 0 18 16"><path d="M3 5 H15 M3 9 H15 M5 2 V14 M9 2 V14 M13 2 V14 M2 13 L15 2" stroke="#c8d0da" stroke-width="1"/></svg>
<svg class="a" style="left:122px;top:709px;" width="18" height="16" viewBox="0 0 18 16"><circle cx="9" cy="8" r="6" stroke="#c8d0da" stroke-width="1.3" fill="none"/><path d="M12 3 A6 6 0 0 1 4.5 13 A6.5 6.5 0 0 0 12 3Z" fill="#c8d0da"/></svg>
<svg class="a" style="left:155px;top:709px;" width="18" height="16" viewBox="0 0 18 16"><circle cx="6" cy="4" r="2.5" fill="#c8d0da"/><path d="M2 10 L9 6.5 L16 10 L9 13.5Z" stroke="#c8d0da" stroke-width="1.2" fill="none"/><path d="M5.5 8.3 L12.5 11.8 M12.5 8.3 L5.5 11.8" stroke="#c8d0da" stroke-width="1"/></svg>
<svg class="a" style="left:188px;top:709px;" width="18" height="16" viewBox="0 0 18 16"><circle cx="7.5" cy="6.5" r="4" stroke="#c8d0da" stroke-width="1.4" fill="none"/><path d="M10.5 9.5 L14 13" stroke="#c8d0da" stroke-width="2"/></svg>
<svg class="a" style="left:221px;top:709px;" width="18" height="16" viewBox="0 0 18 16"><path d="M9 2 V14 M3 8 H15" stroke="#c8d0da" stroke-width="1.1"/><rect x="7" y="6" width="4" height="4" fill="#c8d0da"/><path d="M7.5 3.5 L9 2 L10.5 3.5 M7.5 12.5 L9 14 L10.5 12.5 M4.5 6.5 L3 8 L4.5 9.5 M13.5 6.5 L15 8 L13.5 9.5" stroke="#c8d0da" fill="none"/></svg>
<svg class="a" style="left:254px;top:709px;" width="18" height="16" viewBox="0 0 18 16"><rect x="2" y="2" width="9" height="8" fill="#c8d0da"/><path d="M11 6 L15 3.5 V9.5Z" fill="#c8d0da"/><path d="M4 12.5 Q9 8.5 14 12.5 Q9 16.5 4 12.5Z" fill="#3b3b3b" stroke="#c8d0da" stroke-width="1"/><circle cx="9" cy="12.5" r="1.5" fill="#c8d0da"/></svg>
<svg class="a" style="left:287px;top:709px;" width="18" height="16" viewBox="0 0 18 16"><circle cx="9" cy="8" r="6.5" stroke="#c8d0da" stroke-width="1.3" fill="none"/><path d="M12.5 4.5 L10 9.5 L5.5 11.5 L8 6.5Z" stroke="#c8d0da" stroke-width="1.1" fill="none"/></svg>
<div class="a" style="left:746px;top:81px;width:75px;height:24px;background:#313131;border-radius:4px 4px 0 0"></div>
<svg class="a" style="left:754px;top:90px;" width="16" height="9" viewBox="0 0 16 9"><path d="M4 0.5 H12 Q15.5 0.5 15.5 4.5 Q15.5 8.5 12.5 8.5 L10.5 7 H5.5 L3.5 8.5 Q0.5 8.5 0.5 4.5 Q0.5 0.5 4 0.5Z" fill="#b4b4b4"/><path d="M3 4.5 H6 M4.5 3 V6" stroke="#2e2e2e" stroke-width="1"/><circle cx="11" cy="3.3" r="0.9" fill="#2e2e2e"/><circle cx="12.5" cy="5.5" r="0.9" fill="#2e2e2e"/></svg>
<div class="t" style="left:771.87px;top:88.00px;font-size:12.6px;color:#b4b4b4;transform:scaleX(0.984);">Game</div>
<svg class="a" style="left:1451px;top:87px;" width="4" height="12" viewBox="0 0 4 12"><rect x="0.5" y="0.5" width="2.2" height="2.2" fill="#c8c8c8"/><rect x="0.5" y="4.5" width="2.2" height="2.2" fill="#c8c8c8"/><rect x="0.5" y="8.5" width="2.2" height="2.2" fill="#c8c8c8"/></svg>
<div class="a" style="left:746px;top:105px;width:720px;height:21px;background:#313131;"></div>
<div class="a" style="left:746px;top:125px;width:720px;height:1px;background:#1f1f1f;"></div>
<div class="a" style="left:836px;top:105px;width:1px;height:20px;background:#222222;"></div>
<div class="a" style="left:922px;top:105px;width:1px;height:20px;background:#222222;"></div>
<div class="a" style="left:1082px;top:105px;width:1px;height:20px;background:#222222;"></div>
<div class="a" style="left:1203px;top:105px;width:1px;height:20px;background:#222222;"></div>
<div class="a" style="left:1313px;top:105px;width:1px;height:20px;background:#222222;"></div>
<div class="a" style="left:1339px;top:105px;width:1px;height:20px;background:#222222;"></div>
<div class="a" style="left:1365px;top:105px;width:1px;height:20px;background:#222222;"></div>
<div class="a" style="left:1391px;top:105px;width:1px;height:20px;background:#222222;"></div>
<div class="a" style="left:1431px;top:105px;width:1px;height:20px;background:#222222;"></div>
<div class="t" style="left:749.67px;top:110.00px;font-size:12.6px;color:#b8b8b8;transform:scaleX(0.987);">Game</div>
<svg class="a" style="left:824px;top:113px;" width="8" height="5" viewBox="0 0 8 5"><path d="M0 0 L8 0 L4 4.5Z" fill="#b8b8b8"/></svg>
<div class="t" style="left:845.97px;top:110.00px;font-size:12.6px;color:#b8b8b8;transform:scaleX(0.974);">Display 1</div>
<svg class="a" style="left:910px;top:113px;" width="8" height="5" viewBox="0 0 8 5"><path d="M0 0 L8 0 L4 4.5Z" fill="#b8b8b8"/></svg>
<div class="t" style="left:925.47px;top:110.00px;font-size:12.6px;color:#b8b8b8;transform:scaleX(1.030);">Free Aspect</div>
<svg class="a" style="left:1070px;top:113px;" width="8" height="5" viewBox="0 0 8 5"><path d="M0 0 L8 0 L4 4.5Z" fill="#b8b8b8"/></svg>
<div class="t" style="left:1088.37px;top:110.00px;font-size:12.6px;color:#b8b8b8;transform:scaleX(1.008);">Scale</div>
<div class="a" style="left:1131px;top:115px;width:25px;height:1.5px;background:#707070;"></div>
<svg class="a" style="left:1125px;top:110px;" width="12" height="12" viewBox="0 0 12 12"><circle cx="5.8" cy="5.9" r="5" fill="#8a8a8a"/></svg>
<div class="t" style="left:1161.57px;top:110.00px;font-size:12.6px;color:#b8b8b8;transform:scaleX(0.971);">1x</div>
<div class="t" style="left:1206.77px;top:110.00px;font-size:12.6px;color:#6e6e6e;transform:scaleX(0.986);">Play Focused</div>
<svg class="a" style="left:1301px;top:113px;" width="8" height="5" viewBox="0 0 8 5"><path d="M0 0 L8 0 L4 4.5Z" fill="#7a7a7a"/></svg>
<svg class="a" style="left:1318px;top:108px;" width="15" height="15" viewBox="0 0 15 15"><ellipse cx="7.5" cy="9" rx="5" ry="5.5" fill="#b0b0b0"/><circle cx="7.5" cy="4" r="2.3" fill="#b0b0b0"/><path d="M1.5 5.5 L3.5 7.5 M13.5 5.5 L11.5 7.5 M1 10.5 H3.5 M14 10.5 H11.5 M2 14 L4 12.5 M13 14 L11 12.5" stroke="#b0b0b0" stroke-width="1"/></svg>
<svg class="a" style="left:1345px;top:109px;" width="14" height="12" viewBox="0 0 14 12"><path d="M0.5 4 H3 L6.5 1 V11 L3 8 H0.5Z" fill="#c8c8c8"/><path d="M8.5 3.5 Q10 6 8.5 8.5 M10.5 2 Q13 6 10.5 10" stroke="#c8c8c8" stroke-width="1.2" fill="none"/></svg>
<svg class="a" style="left:1371px;top:110px;" width="15" height="11" viewBox="0 0 15 11"><rect x="0.6" y="0.6" width="13.6" height="9.8" stroke="#c0c0c0" stroke-width="1.1" fill="none"/><rect x="2.2" y="2.2" width="1.4" height="1.6" fill="#c0c0c0"/><rect x="4.4" y="2.2" width="1.4" height="1.6" fill="#c0c0c0"/><rect x="6.6" y="2.2" width="1.4" height="1.6" fill="#c0c0c0"/><rect x="8.8" y="2.2" width="1.4" height="1.6" fill="#c0c0c0"/><rect x="11.0" y="2.2" width="1.4" height="1.6" fill="#c0c0c0"/><rect x="2.2" y="4.9" width="1.4" height="1.6" fill="#c0c0c0"/><rect x="4.4" y="4.9" width="1.4" height="1.6" fill="#c0c0c0"/><rect x="6.6" y="4.9" width="1.4" height="1.6" fill="#c0c0c0"/><rect x="8.8" y="4.9" width="1.4" height="1.6" fill="#c0c0c0"/><rect x="11.0" y="4.9" width="1.4" height="1.6" fill="#c0c0c0"/><rect x="2.2" y="7.6" width="1.4" height="1.6" fill="#c0c0c0"/><rect x="4.4" y="7.6" width="5.8" height="1.6" fill="#c0c0c0"/><rect x="11" y="7.6" width="1.4" height="1.6" fill="#c0c0c0"/></svg>
<div class="t" style="left:1396.17px;top:110.00px;font-size:12.6px;color:#b8b8b8;transform:scaleX(1.064);">Stats</div>
<div class="a" style="left:1432px;top:105px;width:34px;height:20px;overflow:hidden">
<div class="t" style="left:2.07px;top:5.00px;font-size:12.6px;color:#b8b8b8;">Gizmos</div>
</div>
<svg class="a" style="left:746px;top:126px;overflow:hidden" width="720" height="606" viewBox="746 126 720 606"><defs><radialGradient id="gbg" cx="1106" cy="420" r="520" gradientUnits="userSpaceOnUse"><stop offset="0.7" stop-color="#66615a"/><stop offset="1" stop-color="#6f6360"/></radialGradient><linearGradient id="gfl" x1="800" y1="300" x2="1350" y2="680" gradientUnits="userSpaceOnUse"><stop offset="0" stop-color="#9f9591"/><stop offset="1" stop-color="#aca29d"/></linearGradient></defs><rect x="746" y="126" width="720" height="606" fill="url(#gbg)"/><polygon points="1032.7,232.4 1120.8,232.4 1120.8,310.4 1029.7,310.4 1025.0,428.7 1057.5,428.7 1058.1,367.8 1373.2,367.8 1399.8,563.4 1262.0,563.4 1269.5,676.0 796.0,676.0 830.0,428.7 927.5,428.7 942.8,257.8 1032.7,257.8" fill="url(#gfl)"/><rect x="944" y="637" width="144" height="39.5" fill="#66615a"/><polygon points="1050.7,449.0 1147.0,449.0 1151.5,456.0 1151.5,492.0 1055.0,492.0 1050.7,484.0" fill="#2f3b4f"/><rect x="1055" y="457" width="102" height="35" fill="#5db7f4"/><polygon points="1057.0,457.0 1064.0,457.0 1070.0,474.5 1064.0,492.0 1057.0,492.0 1063.0,474.5" fill="#4ba2e0"/><polygon points="1074.0,457.0 1081.0,457.0 1087.0,474.5 1081.0,492.0 1074.0,492.0 1080.0,474.5" fill="#4ba2e0"/><polygon points="1091.3,457.0 1098.3,457.0 1104.3,474.5 1098.3,492.0 1091.3,492.0 1097.3,474.5" fill="#4ba2e0"/><polygon points="1108.3,457.0 1115.3,457.0 1121.3,474.5 1115.3,492.0 1108.3,492.0 1114.3,474.5" fill="#4ba2e0"/><polygon points="1125.3,457.0 1132.3,457.0 1138.3,474.5 1132.3,492.0 1125.3,492.0 1131.3,474.5" fill="#4ba2e0"/><polygon points="1142.3,457.0 1149.3,457.0 1155.3,474.5 1149.3,492.0 1142.3,492.0 1148.3,474.5" fill="#4ba2e0"/><rect x="1089" y="457" width="1" height="35" fill="#3a82c0"/><rect x="1123" y="457" width="1" height="35" fill="#3a82c0"/><rect x="1055" y="491" width="102" height="3" fill="#4b3f39"/><rect x="834" y="648" width="75.1" height="75" fill="#fdab55"/><rect x="928" y="648" width="74.7" height="75" fill="#ff8c00"/><rect x="1022" y="648" width="74.6" height="75" fill="#ff8c00"/><rect x="1114.8" y="648" width="74.7" height="75" fill="#ff8c00"/><rect x="1208.8" y="648" width="75.0" height="75" fill="#fe8b02"/><rect x="1302.8" y="648" width="75.0" height="75" fill="#f4890a"/><polygon points="851.5,681.0 852.5,691.0 880.0,701.5 892.0,684.0 892.0,674.0" fill="#1f1f22"/><polygon points="851.0,679.0 868.5,668.5 892.5,673.5 882.0,691.0" fill="#2f86bb"/><polygon points="851.0,679.0 882.0,691.0 882.0,695.0 851.0,685.0" fill="#1d4f7a"/><circle cx="854.0" cy="681.0" r="2.6" fill="#4a4a4d"/><circle cx="861.5" cy="683.8" r="2.6" fill="#4a4a4d"/><circle cx="869.0" cy="686.6" r="2.6" fill="#4a4a4d"/><circle cx="876.5" cy="689.4" r="2.6" fill="#4a4a4d"/></svg>
<div class="t" style="left:886.85px;top:688.00px;font-size:37px;color:#ffffff;transform:scaleX(1.143);">4</div>
<div class="a" style="left:1468px;top:105px;width:445px;height:899px;background:#2e2e2e;"></div>
<div class="a" style="left:1468px;top:81px;width:95px;height:24px;background:#2e2e2e;border-radius:4px 4px 0 0"></div>
<div class="a" style="left:1468px;top:81px;width:95px;height:2px;background:#2d5b8a;border-radius:4px 4px 0 0"></div>
<svg class="a" style="left:1478px;top:88px;" width="11" height="11" viewBox="0 0 11 11"><circle cx="5.5" cy="5.5" r="5.3" fill="#b4b4b4"/><rect x="4.6" y="4.5" width="1.9" height="4.5" fill="#2e2e2e"/><rect x="4.6" y="2" width="1.9" height="1.7" fill="#2e2e2e"/></svg>
<div class="t" style="left:1493.67px;top:88.00px;font-size:12.6px;color:#b4b4b4;transform:scaleX(1.042);">Inspector</div>
<svg class="a" style="left:1882px;top:87px;" width="10" height="12" viewBox="0 0 10 12"><path d="M2 5.5 V3.5 Q5 0 8 3.5" stroke="#c8c8c8" stroke-width="1.2" fill="none"/><rect x="0.6" y="5.6" width="8.8" height="5.8" stroke="#c8c8c8" stroke-width="1.2" fill="none"/></svg>
<svg class="a" style="left:1903px;top:87px;" width="4" height="12" viewBox="0 0 4 12"><rect x="0.5" y="0.5" width="2.2" height="2.2" fill="#c8c8c8"/><rect x="0.5" y="4.5" width="2.2" height="2.2" fill="#c8c8c8"/><rect x="0.5" y="8.5" width="2.2" height="2.2" fill="#c8c8c8"/></svg>
<div class="a" style="left:1468px;top:105px;width:445px;height:63px;background:#303030;"></div>
<svg class="a" style="left:1475px;top:115px;" width="22" height="26" viewBox="0 0 22 26"><path d="M10 1 L19 5.5 L19 15.5 L10 20 L1 15.5 L1 5.5Z M1 5.5 L10 10 L19 5.5 M10 10 V20" stroke="#b8b8b8" stroke-width="1.3" fill="none"/><path d="M19.5 21 H26.5 L23 25Z" fill="#b8b8b8"/></svg>
<div class="a" style="left:1513px;top:116px;width:14px;height:14px;background:#1f1f1f;border-radius:2px;border:1px solid #191919"></div>
<svg class="a" style="left:1515px;top:118px;" width="10" height="10" viewBox="0 0 10 10"><path d="M1.5 5 L4 7.8 L8.5 2.2" stroke="#e0e0e0" stroke-width="1.5" fill="none"/></svg>
<div class="a" style="left:1533px;top:114px;width:305px;height:18px;background:#222222;border-radius:3px;border:1px solid #1a1a1a"></div>
<div class="t" style="left:1535.37px;top:118.00px;font-size:12.6px;color:#d2d2d2;font-weight:700;transform:scaleX(0.974);">PlayerInventory</div>
<div class="a" style="left:1841px;top:115px;width:14px;height:15px;background:#222222;border-radius:2px;border:1px solid #1a1a1a"></div>
<div class="t" style="left:1858.47px;top:118.00px;font-size:12.6px;color:#b8b8b8;transform:scaleX(1.062);">Static</div>
<svg class="a" style="left:1904px;top:120px;" width="9" height="6" viewBox="0 0 9 6"><path d="M0 0 L9 0 L4.5 5Z" fill="#b8b8b8"/></svg>
<div class="t" style="left:1507.87px;top:141.00px;font-size:12.6px;color:#9a9a9a;transform:scaleX(1.034);">Tag</div>
<div class="a" style="left:1533px;top:139px;width:171px;height:17px;background:#404040;border-radius:3px;border-bottom:1px solid #232323"></div>
<div class="t" style="left:1535.77px;top:141.00px;font-size:12.6px;color:#c4c4c4;transform:scaleX(1.029);">Untagged</div>
<svg class="a" style="left:1691px;top:145px;" width="8" height="5" viewBox="0 0 8 5"><path d="M0 0 L8 0 L4 4.5Z" fill="#b8b8b8"/></svg>
<div class="t" style="left:1716.87px;top:141.00px;font-size:12.6px;color:#9a9a9a;transform:scaleX(0.982);">Layer</div>
<div class="a" style="left:1752px;top:139px;width:161px;height:17px;background:#404040;border-radius:3px 0 0 3px;border-bottom:1px solid #232323"></div>
<div class="t" style="left:1755.97px;top:141.00px;font-size:12.6px;color:#c4c4c4;transform:scaleX(1.030);">Default</div>
<svg class="a" style="left:1900px;top:145px;" width="8" height="5" viewBox="0 0 8 5"><path d="M0 0 L8 0 L4 4.5Z" fill="#b8b8b8"/></svg>
<div class="a" style="left:1468px;top:168px;width:445px;height:1px;background:#1a1a1a;"></div>
<div class="a" style="left:1468px;top:169px;width:445px;height:20px;background:#333333;"></div>
<div class="a" style="left:1468px;top:188px;width:445px;height:1px;background:#2a2a2a;"></div>
<svg class="a" style="left:1474px;top:177px;" width="9" height="8" viewBox="0 0 9 8"><path d="M0 0 H9 L4.5 7.5Z" fill="#7a7a7a"/></svg>
<svg class="a" style="left:1490px;top:173px;" width="14" height="14" viewBox="0 0 14 14"><path d="M6.5 1 V7" stroke="#7fd04c" stroke-width="2" stroke-linecap="round"/><path d="M6 7.5 L1.5 10.5" stroke="#4cb2e8" stroke-width="2" stroke-linecap="round"/><path d="M7 7.5 L11.5 10.5" stroke="#e8623c" stroke-width="2" stroke-linecap="round"/></svg>
<div class="t" style="left:1527.67px;top:174.00px;font-size:12.6px;color:#d0d0d0;font-weight:700;transform:scaleX(0.981);">Transform</div>
<svg class="a" style="left:1860px;top:175px;" width="11" height="11" viewBox="0 0 11 11"><circle cx="5.5" cy="5.5" r="5.3" fill="#c4c4c4"/><path d="M3.6 4.3 Q3.6 2.3 5.5 2.3 Q7.4 2.3 7.4 4 Q7.4 5.2 5.6 6 V7" stroke="#333" stroke-width="1.3" fill="none"/><rect x="4.9" y="7.9" width="1.3" height="1.3" fill="#333"/></svg>
<svg class="a" style="left:1880px;top:174px;" width="11" height="12" viewBox="0 0 11 12"><path d="M0 3 H11 M0 8.5 H11" stroke="#c4c4c4" stroke-width="1.2"/><rect x="6.5" y="1" width="1.5" height="4" fill="#c4c4c4"/><rect x="2.5" y="6.5" width="1.5" height="4" fill="#c4c4c4"/></svg>
<svg class="a" style="left:1903px;top:174px;" width="4" height="12" viewBox="0 0 4 12"><rect x="0.5" y="0.5" width="2.2" height="2.2" fill="#c8c8c8"/><rect x="0.5" y="4.5" width="2.2" height="2.2" fill="#c8c8c8"/><rect x="0.5" y="8.5" width="2.2" height="2.2" fill="#c8c8c8"/></svg>
<div class="t" style="left:1486.77px;top:198.00px;font-size:12.6px;color:#c4c4c4;transform:scaleX(1.031);">Position</div>
<div class="t" style="left:1651.17px;top:198.00px;font-size:12.6px;color:#a8a8a8;transform:scaleX(1.119);">X</div>
<div class="a" style="left:1666px;top:194.3px;width:69.5px;height:16.5px;background:#222222;border-radius:3px;border:1px solid #1a1a1a"></div>
<div class="t" style="left:1668.87px;top:198.00px;font-size:12.6px;color:#c8c8c8;">0</div>
<div class="t" style="left:1740.27px;top:198.00px;font-size:12.6px;color:#a8a8a8;transform:scaleX(1.105);">Y</div>
<div class="a" style="left:1755.4px;top:194.3px;width:69.09999999999991px;height:16.5px;background:#222222;border-radius:3px;border:1px solid #1a1a1a"></div>
<div class="t" style="left:1758.27px;top:198.00px;font-size:12.6px;color:#c8c8c8;">0</div>
<div class="t" style="left:1829.67px;top:198.00px;font-size:12.6px;color:#a8a8a8;transform:scaleX(1.102);">Z</div>
<div class="a" style="left:1844.4px;top:194.3px;width:68.59999999999991px;height:16.5px;background:#222222;border-radius:3px;border:1px solid #1a1a1a"></div>
<div class="t" style="left:1847.27px;top:198.00px;font-size:12.6px;color:#c8c8c8;">0</div>
<div class="t" style="left:1486.77px;top:218.00px;font-size:12.6px;color:#c4c4c4;transform:scaleX(1.023);">Rotation</div>
<div class="t" style="left:1651.17px;top:218.00px;font-size:12.6px;color:#a8a8a8;transform:scaleX(1.119);">X</div>
<div class="a" style="left:1666px;top:214.3px;width:69.5px;height:16.5px;background:#222222;border-radius:3px;border:1px solid #1a1a1a"></div>
<div class="t" style="left:1668.87px;top:218.00px;font-size:12.6px;color:#c8c8c8;">0</div>
<div class="t" style="left:1740.27px;top:218.00px;font-size:12.6px;color:#a8a8a8;transform:scaleX(1.105);">Y</div>
<div class="a" style="left:1755.4px;top:214.3px;width:69.09999999999991px;height:16.5px;background:#222222;border-radius:3px;border:1px solid #1a1a1a"></div>
<div class="t" style="left:1758.27px;top:218.00px;font-size:12.6px;color:#c8c8c8;">0</div>
<div class="t" style="left:1829.67px;top:218.00px;font-size:12.6px;color:#a8a8a8;transform:scaleX(1.102);">Z</div>
<div class="a" style="left:1844.4px;top:214.3px;width:68.59999999999991px;height:16.5px;background:#222222;border-radius:3px;border:1px solid #1a1a1a"></div>
<div class="t" style="left:1847.27px;top:218.00px;font-size:12.6px;color:#c8c8c8;">0</div>
<div class="t" style="left:1486.77px;top:238.00px;font-size:12.6px;color:#c4c4c4;transform:scaleX(0.998);">Scale</div>
<div class="t" style="left:1651.17px;top:238.00px;font-size:12.6px;color:#a8a8a8;transform:scaleX(1.119);">X</div>
<div class="a" style="left:1666px;top:234.4px;width:69.5px;height:16.5px;background:#222222;border-radius:3px;border:1px solid #1a1a1a"></div>
<div class="t" style="left:1668.87px;top:238.00px;font-size:12.6px;color:#c8c8c8;">1</div>
<div class="t" style="left:1740.27px;top:238.00px;font-size:12.6px;color:#a8a8a8;transform:scaleX(1.105);">Y</div>
<div class="a" style="left:1755.4px;top:234.4px;width:69.09999999999991px;height:16.5px;background:#222222;border-radius:3px;border:1px solid #1a1a1a"></div>
<div class="t" style="left:1758.27px;top:238.00px;font-size:12.6px;color:#c8c8c8;">1</div>
<div class="t" style="left:1829.67px;top:238.00px;font-size:12.6px;color:#a8a8a8;transform:scaleX(1.102);">Z</div>
<div class="a" style="left:1844.4px;top:234.4px;width:68.59999999999991px;height:16.5px;background:#222222;border-radius:3px;border:1px solid #1a1a1a"></div>
<div class="t" style="left:1847.27px;top:238.00px;font-size:12.6px;color:#c8c8c8;">1</div>
<svg class="a" style="left:1629px;top:238px;" width="13" height="10" viewBox="0 0 13 10"><path d="M4 1.5 H2.5 Q0.5 1.5 0.5 5 Q0.5 8.5 2.5 8.5 H4.5 M8.5 1.5 H10.5 Q12.5 1.5 12.5 5 Q12.5 8.5 10.5 8.5 H9 M4 5 H9 M1.5 0.5 L11.5 9.5" stroke="#9a9a9a" stroke-width="1.1" fill="none"/></svg>
<div class="a" style="left:1468px;top:261px;width:445px;height:1px;background:#1c1c1c;"></div>
<div class="a" style="left:1468px;top:262px;width:445px;height:20px;background:#333333;"></div>
<div class="a" style="left:1468px;top:281px;width:445px;height:1px;background:#2a2a2a;"></div>
<svg class="a" style="left:1474px;top:270px;" width="9" height="8" viewBox="0 0 9 8"><path d="M0 0 H9 L4.5 7.5Z" fill="#7a7a7a"/></svg>
<svg class="a" style="left:1490px;top:266px;" width="14" height="14" viewBox="0 0 14 14"><path d="M1 0.5 H9 L12 3.5 V13.5 H1Z" fill="#d8d8d8"/><path d="M4.5 5 L4 11 M7.5 5 L7 11 M3 6.8 H9 M2.8 9.3 H8.8" stroke="#3a8a3a" stroke-width="1.1"/></svg>
<div class="a" style="left:1508px;top:265px;width:14px;height:14px;background:#1f1f1f;border-radius:2px;border:1px solid #191919"></div>
<svg class="a" style="left:1510px;top:267px;" width="10" height="10" viewBox="0 0 10 10"><path d="M1.5 5 L4 7.8 L8.5 2.2" stroke="#e0e0e0" stroke-width="1.5" fill="none"/></svg>
<div class="t" style="left:1527.67px;top:268.00px;font-size:12.6px;color:#d0d0d0;font-weight:700;transform:scaleX(0.981);">Inventory (Script)</div>
<svg class="a" style="left:1860px;top:268px;" width="11" height="11" viewBox="0 0 11 11"><circle cx="5.5" cy="5.5" r="5.3" fill="#c4c4c4"/><path d="M3.6 4.3 Q3.6 2.3 5.5 2.3 Q7.4 2.3 7.4 4 Q7.4 5.2 5.6 6 V7" stroke="#333" stroke-width="1.3" fill="none"/><rect x="4.9" y="7.9" width="1.3" height="1.3" fill="#333"/></svg>
<svg class="a" style="left:1880px;top:267px;" width="11" height="12" viewBox="0 0 11 12"><path d="M0 3 H11 M0 8.5 H11" stroke="#c4c4c4" stroke-width="1.2"/><rect x="6.5" y="1" width="1.5" height="4" fill="#c4c4c4"/><rect x="2.5" y="6.5" width="1.5" height="4" fill="#c4c4c4"/></svg>
<svg class="a" style="left:1903px;top:267px;" width="4" height="12" viewBox="0 0 4 12"><rect x="0.5" y="0.5" width="2.2" height="2.2" fill="#c8c8c8"/><rect x="0.5" y="4.5" width="2.2" height="2.2" fill="#c8c8c8"/><rect x="0.5" y="8.5" width="2.2" height="2.2" fill="#c8c8c8"/></svg>
<div class="t" style="left:1486.57px;top:290.00px;font-size:12.6px;color:#777777;transform:scaleX(1.047);">Script</div>
<div class="a" style="left:1651.7px;top:286.6px;width:262px;height:17px;background:#292929;border-radius:3px 0 0 3px;border:1px solid #242424"></div>
<svg class="a" style="left:1656px;top:289px;" width="9" height="12" viewBox="0 0 9 12"><path d="M0.5 0.5 H6 L8.5 3 V11.5 H0.5Z" fill="#808080"/><path d="M3 4 L2.7 9 M5.5 4 L5.2 9 M1.8 5.5 H6.8 M1.6 7.5 H6.6" stroke="#3d6b3d" stroke-width="0.9"/></svg>
<div class="t" style="left:1667.67px;top:290.00px;font-size:12.6px;color:#7a7a7a;transform:scaleX(1.017);">InventorySystem</div>
<svg class="a" style="left:1899px;top:290px;" width="11" height="11" viewBox="0 0 11 11"><circle cx="5" cy="5" r="4.3" stroke="#707070" stroke-width="1.1" fill="none"/><circle cx="5" cy="5" r="1.8" fill="#707070"/></svg>
<svg class="a" style="left:1473px;top:312px;" width="9" height="8" viewBox="0 0 9 8"><path d="M0 0 H9 L4.5 7.5Z" fill="#9a9a9a"/></svg>
<div class="t" style="left:1486.57px;top:310.00px;font-size:12.6px;color:#c4c4c4;transform:scaleX(1.025);">Slots</div>
<div class="a" style="left:1896px;top:307px;width:16px;height:16.5px;background:#222222;border-radius:3px;border:1px solid #1a1a1a"></div>
<div class="t" style="left:1899.87px;top:310.00px;font-size:12.6px;color:#c8c8c8;">1</div>
<div class="a" style="left:1483.7px;top:324.5px;width:428px;height:67px;background:#303030;border-radius:3px;border:1px solid #1f1f1f"></div>
<div class="a" style="left:1487px;top:334px;width:10px;height:1px;background:#555;"></div>
<div class="a" style="left:1487px;top:337px;width:10px;height:1px;background:#555;"></div>
<svg class="a" style="left:1502px;top:334px;" width="9" height="8" viewBox="0 0 9 8"><path d="M0 0 H9 L4.5 7.5Z" fill="#9a9a9a"/></svg>
<div class="t" style="left:1515.37px;top:332.00px;font-size:12.6px;color:#c4c4c4;transform:scaleX(1.015);">Element 0</div>
<div class="t" style="left:1530.67px;top:353.00px;font-size:12.6px;color:#c4c4c4;transform:scaleX(1.028);">Item</div>
<div class="a" style="left:1651.2px;top:349px;width:256.5px;height:17.5px;background:#222222;border-radius:3px;border:1px solid #1a1a1a"></div>
<div class="a" style="left:1889.4px;top:350px;width:17.5px;height:15.5px;background:#2a2a2a;border-radius:0 3px 3px 0"></div>
<svg class="a" style="left:1655px;top:351px;" width="12" height="13" viewBox="0 0 12 13"><path d="M5 1 L9.5 3.2 L9.5 8 L5 10.2 L0.5 8 L0.5 3.2Z M0.5 3.2 L5 5.4 L9.5 3.2 M5 5.4 V10.2" stroke="#5fb4e0" stroke-width="1" fill="none"/><path d="M8 8 Q7 9.5 8 11 M10.5 8 Q11.5 9.5 10.5 11" stroke="#e0643c" stroke-width="1.1" fill="none"/></svg>
<div class="t" style="left:1667.67px;top:353.00px;font-size:12.6px;color:#d0d0d0;transform:scaleX(1.017);">Belt (Item)</div>
<svg class="a" style="left:1893px;top:352px;" width="11" height="11" viewBox="0 0 11 11"><circle cx="5.5" cy="5.5" r="4.6" stroke="#bdbdbd" stroke-width="1.1" fill="none"/><circle cx="5.5" cy="5.5" r="2" fill="#bdbdbd"/></svg>
<div class="t" style="left:1530.67px;top:373.00px;font-size:12.6px;color:#c4c4c4;transform:scaleX(1.036);">Quantity</div>
<div class="a" style="left:1651.2px;top:369.5px;width:256.5px;height:17px;background:#222222;border-radius:3px;border:1px solid #1a1a1a"></div>
<div class="t" style="left:1655.97px;top:373.00px;font-size:12.6px;color:#c8c8c8;transform:scaleX(1.095);">5</div>
<div class="a" style="left:1844.4px;top:391px;width:53.5px;height:22.5px;background:#2f2f2f;border-radius:0 0 3px 3px;border:1px solid #1f1f1f;border-top:none"></div>
<svg class="a" style="left:1854px;top:399px;" width="11" height="10" viewBox="0 0 11 10"><path d="M5.5 0.5 V9.5 M1 5 H10" stroke="#d8d8d8" stroke-width="1.8"/></svg>
<svg class="a" style="left:1878px;top:403px;" width="8" height="3" viewBox="0 0 8 3"><path d="M0.5 1.5 H7.5" stroke="#d8d8d8" stroke-width="1.8"/></svg>
<div class="a" style="left:1468px;top:421px;width:445px;height:1px;background:#1c1c1c;"></div>
<div class="a" style="left:1579px;top:431px;width:228px;height:22.5px;background:#3f3f3f;border-radius:3px;border:1px solid #2a2a2a"></div>
<div class="t" style="left:1646.57px;top:436.00px;font-size:12.6px;color:#c8c8c8;transform:scaleX(1.017);">Add Component</div>
<div class="a" style="left:0px;top:734px;width:79px;height:24px;background:#323232;border-radius:4px 4px 0 0"></div>
<svg class="a" style="left:6px;top:742px;" width="13" height="10" viewBox="0 0 13 10"><path d="M0 0 H5 L6.5 1.8 H13 V10 H0Z" fill="#b4b4b4"/></svg>
<div class="t" style="left:22.77px;top:741.00px;font-size:12.6px;color:#b4b4b4;transform:scaleX(1.038);">Project</div>
<svg class="a" style="left:90px;top:742px;" width="10" height="11" viewBox="0 0 10 11"><rect x="0.6" y="0.6" width="8.8" height="9.8" stroke="#b4b4b4" stroke-width="1.2" fill="none"/><path d="M2.5 3 H7.5 M2.5 5.2 H7.5 M2.5 7.5 H7.5" stroke="#b4b4b4" stroke-width="1"/></svg>
<div class="t" style="left:104.47px;top:741.00px;font-size:12.6px;color:#b4b4b4;transform:scaleX(1.019);">Console</div>
<svg class="a" style="left:175px;top:740px;" width="14" height="14" viewBox="0 0 14 14"><circle cx="2" cy="2.5" r="1.6" stroke="#c8c8c8" fill="none"/><circle cx="10.5" cy="2.5" r="1.6" stroke="#c8c8c8" fill="none"/><path d="M3.5 2.5 H9 M6 2.5 V7" stroke="#c8c8c8"/><rect x="6.5" y="6" width="6.5" height="7.5" rx="1" fill="#e5332a"/><rect x="9.2" y="7.3" width="1.2" height="3.3" fill="#fff"/><rect x="9.2" y="11.3" width="1.2" height="1.1" fill="#fff"/></svg>
<div class="t" style="left:192.77px;top:741.00px;font-size:12.6px;color:#b4b4b4;transform:scaleX(1.024);">Unity Version Control</div>
<svg class="a" style="left:340px;top:741px;" width="11" height="11" viewBox="0 0 11 11"><path d="M0.5 3 Q3 5.5 5.5 5.5 M0.5 8 Q3 5.5 5.5 5.5 H10.5 M7.5 2.5 L10.5 5.5 L7.5 8.5" stroke="#c8c8c8" stroke-width="1.3" fill="none"/></svg>
<div class="t" style="left:354.27px;top:741.00px;font-size:12.6px;color:#b4b4b4;transform:scaleX(1.038);">Animator</div>
<svg class="a" style="left:432px;top:741px;" width="12" height="12" viewBox="0 0 12 12"><circle cx="6" cy="6" r="5.5" fill="#c8c8c8"/><path d="M6 2.5 V6 H9" stroke="#111" stroke-width="1.3" fill="none"/></svg>
<div class="t" style="left:448.37px;top:741.00px;font-size:12.6px;color:#b4b4b4;transform:scaleX(1.032);">Animation</div>
<svg class="a" style="left:940px;top:740px;" width="10" height="12" viewBox="0 0 10 12"><path d="M2 5.5 V3.5 Q5 0 8 3.5" stroke="#c8c8c8" stroke-width="1.2" fill="none"/><rect x="0.6" y="5.6" width="8.8" height="5.8" stroke="#c8c8c8" stroke-width="1.2" fill="none"/></svg>
<svg class="a" style="left:961px;top:740px;" width="4" height="12" viewBox="0 0 4 12"><rect x="0.5" y="0.5" width="2.2" height="2.2" fill="#c8c8c8"/><rect x="0.5" y="4.5" width="2.2" height="2.2" fill="#c8c8c8"/><rect x="0.5" y="8.5" width="2.2" height="2.2" fill="#c8c8c8"/></svg>
<div class="a" style="left:0px;top:758px;width:975px;height:21px;background:#323232;"></div>
<div class="a" style="left:0px;top:778px;width:975px;height:1px;background:#1f1f1f;"></div>
<svg class="a" style="left:5px;top:762px;" width="13" height="13" viewBox="0 0 13 13"><path d="M6.5 0.5 V12.5 M0.5 6.5 H12.5" stroke="#c8c8c8" stroke-width="1.7"/></svg>
<svg class="a" style="left:21px;top:766px;" width="8" height="5" viewBox="0 0 8 5"><path d="M0 0 L8 0 L4 4.5Z" fill="#c8c8c8"/></svg>
<div class="a" style="left:509.4px;top:760px;width:317.5px;height:16px;background:#222222;border-radius:3px;border:1px solid #1a1a1a"></div>
<svg class="a" style="left:513px;top:763px;" width="10" height="10" viewBox="0 0 10 10"><circle cx="3.8" cy="3.8" r="2.8" stroke="#c0c0c0" stroke-width="1.2" fill="none"/><path d="M5.8 5.8 L8.5 8.5" stroke="#c0c0c0" stroke-width="1.5"/></svg>
<svg class="a" style="left:811px;top:761px;" width="14" height="14" viewBox="0 0 14 14"><rect x="4.5" y="0.6" width="8.9" height="8.9" stroke="#c0c0c0" stroke-width="1.1" fill="none"/><rect x="0.6" y="8.5" width="5" height="5" stroke="#c0c0c0" stroke-width="1.1" fill="#222"/><path d="M6.5 7.5 L11 3 M8 3 H11 V6" stroke="#c0c0c0" stroke-width="1.1" fill="none"/></svg>
<div class="a" style="left:829.7px;top:758px;width:1px;height:20px;background:#232323;"></div>
<div class="a" style="left:855.6px;top:758px;width:1px;height:20px;background:#232323;"></div>
<div class="a" style="left:881.6px;top:758px;width:1px;height:20px;background:#232323;"></div>
<div class="a" style="left:907.5px;top:758px;width:1px;height:20px;background:#232323;"></div>
<div class="a" style="left:933.4px;top:758px;width:1px;height:20px;background:#232323;"></div>
<svg class="a" style="left:836px;top:761px;" width="13" height="13" viewBox="0 0 13 13"><rect x="0.5" y="0.5" width="5.5" height="6" fill="#9a9a9a"/><path d="M9 1 L12.5 7 H5.5Z" fill="#9a9a9a"/><circle cx="4" cy="9.5" r="3.3" fill="#9a9a9a"/></svg>
<svg class="a" style="left:861px;top:762px;" width="13" height="12" viewBox="0 0 13 12"><path d="M6 0.5 H12 V6.5 L6 12 L0.5 6.5Z" fill="#9a9a9a"/><circle cx="9.5" cy="3" r="1.2" fill="#2e2e2e"/></svg>
<svg class="a" style="left:887px;top:761px;" width="13" height="13" viewBox="0 0 13 13"><circle cx="6.5" cy="6.5" r="6.2" fill="#a8a8a8"/><rect x="5.6" y="2.5" width="1.9" height="5.5" fill="#2e2e2e"/><rect x="5.6" y="9" width="1.9" height="1.9" fill="#2e2e2e"/></svg>
<svg class="a" style="left:913px;top:761px;" width="14" height="13" viewBox="0 0 14 13"><path d="M7 0.5 L8.8 4.8 L13.5 5 L9.8 8 L11 12.5 L7 10 L3 12.5 L4.2 8 L0.5 5 L5.2 4.8Z" fill="#8a8a8a"/></svg>
<svg class="a" style="left:940px;top:763px;" width="16" height="10" viewBox="0 0 16 10"><path d="M0.5 5 Q8 -2 15.5 5 Q8 12 0.5 5Z" stroke="#7a7a7a" stroke-width="1.1" fill="none"/><circle cx="8" cy="4.5" r="2.5" fill="#7a7a7a"/></svg>
<div class="t" style="left:954.87px;top:763.00px;font-size:12.6px;color:#a8a8a8;transform:scaleX(1.137);">22</div>
<div class="a" style="left:0px;top:779px;width:194px;height:225px;background:#2e2e2e;"></div>
<div class="a" style="left:193px;top:779px;width:1px;height:225px;background:#242424;"></div>
<div class="a" style="left:194px;top:779px;width:12px;height:225px;background:#2b2b2b;"></div>
<div class="a" style="left:197px;top:813px;width:8px;height:80px;background:#3e3e3e;border-radius:4px"></div>
<svg class="a" style="left:196px;top:785px;" width="8" height="5" viewBox="0 0 8 5"><path d="M0 4.5 L8 4.5 L4 0Z" fill="#b8b8b8"/></svg>
<svg class="a" style="left:196px;top:994px;" width="8" height="5" viewBox="0 0 8 5"><path d="M0 0 L8 0 L4 4.5Z" fill="#b8b8b8"/></svg>
<div class="a" style="left:206px;top:779px;width:1.5px;height:225px;background:#1a1a1a;"></div>
<div class="a" style="left:0px;top:878px;width:193px;height:16px;background:#3a3a3a;"></div>
<svg class="a" style="left:2px;top:803px;" width="9" height="8" viewBox="0 0 9 8"><path d="M0.5 0.5 H8.5 L4.5 7.5Z" fill="#6e6e6e"/></svg>
<svg class="a" style="left:16px;top:800px;" width="16" height="15" viewBox="0 0 16 15"><path d="M0.5 1 H5 L6.5 2.8 H11.5 V4.5 H3 L0.5 11Z" fill="#b0b0b0"/><path d="M3.2 5.2 H13.5 L11 11 H0.8Z" fill="#b0b0b0"/><circle cx="11.2" cy="10.5" r="3.8" fill="#19a84a"/><path d="M9 10.5 H13.4" stroke="#0f5c28" stroke-width="1.2"/></svg>
<div class="t" style="left:32.87px;top:800.00px;font-size:12.6px;color:#c8c8c8;font-weight:700;transform:scaleX(0.976);">Assets</div>
<svg class="a" style="left:17px;top:817.7px;" width="8" height="9" viewBox="0 0 8 9"><path d="M0.5 0.5 L7.5 4.5 L0.5 8.5Z" fill="#6e6e6e"/></svg>
<svg class="a" style="left:30px;top:816.7px;" width="16" height="15" viewBox="0 0 16 15"><path d="M0.5 1 H5 L6.5 2.8 H12.5 V11 H0.5Z" fill="#b0b0b0"/><circle cx="11.2" cy="10.5" r="3.8" fill="#19a84a"/><path d="M9 10.5 H13.4" stroke="#0f5c28" stroke-width="1.2"/></svg>
<div class="t" style="left:45.87px;top:816.00px;font-size:12.6px;color:#c4c4c4;transform:scaleX(1.009);">Fonts</div>
<svg class="a" style="left:17px;top:833.7px;" width="8" height="9" viewBox="0 0 8 9"><path d="M0.5 0.5 L7.5 4.5 L0.5 8.5Z" fill="#6e6e6e"/></svg>
<svg class="a" style="left:30px;top:832.7px;" width="16" height="15" viewBox="0 0 16 15"><path d="M0.5 1 H5 L6.5 2.8 H12.5 V11 H0.5Z" fill="#b0b0b0"/><circle cx="11.2" cy="10.5" r="3.8" fill="#19a84a"/><path d="M9 10.5 H13.4" stroke="#0f5c28" stroke-width="1.2"/></svg>
<div class="t" style="left:45.87px;top:832.00px;font-size:12.6px;color:#c4c4c4;transform:scaleX(1.029);">Materials</div>
<svg class="a" style="left:16px;top:850.7px;" width="9" height="8" viewBox="0 0 9 8"><path d="M0.5 0.5 H8.5 L4.5 7.5Z" fill="#6e6e6e"/></svg>
<svg class="a" style="left:30px;top:848.7px;" width="16" height="15" viewBox="0 0 16 15"><path d="M0.5 1 H5 L6.5 2.8 H11.5 V4.5 H3 L0.5 11Z" fill="#b0b0b0"/><path d="M3.2 5.2 H13.5 L11 11 H0.8Z" fill="#b0b0b0"/><circle cx="11.2" cy="10.5" r="3.8" fill="#19a84a"/><path d="M9 10.5 H13.4" stroke="#0f5c28" stroke-width="1.2"/></svg>
<div class="t" style="left:45.87px;top:848.00px;font-size:12.6px;color:#c4c4c4;transform:scaleX(1.032);">Models</div>
<svg class="a" style="left:31px;top:865.7px;" width="8" height="9" viewBox="0 0 8 9"><path d="M0.5 0.5 L7.5 4.5 L0.5 8.5Z" fill="#6e6e6e"/></svg>
<svg class="a" style="left:44px;top:864.7px;" width="16" height="15" viewBox="0 0 16 15"><path d="M0.5 1 H5 L6.5 2.8 H12.5 V11 H0.5Z" fill="#b0b0b0"/><circle cx="11.2" cy="10.5" r="3.8" fill="#19a84a"/><path d="M9 10.5 H13.4" stroke="#0f5c28" stroke-width="1.2"/></svg>
<div class="t" style="left:59.87px;top:864.00px;font-size:12.6px;color:#c4c4c4;transform:scaleX(1.047);">Belt</div>
<svg class="a" style="left:30px;top:880.7px;" width="16" height="15" viewBox="0 0 16 15"><path d="M0.5 1 H5 L6.5 2.8 H12.5 V11 H0.5Z" fill="#b0b0b0"/><circle cx="11.2" cy="10.5" r="3.8" fill="#19a84a"/><path d="M9 10.5 H13.4" stroke="#0f5c28" stroke-width="1.2"/></svg>
<div class="t" style="left:45.87px;top:880.00px;font-size:12.6px;color:#c4c4c4;transform:scaleX(0.992);">Resources</div>
<svg class="a" style="left:30px;top:896.7px;" width="16" height="15" viewBox="0 0 16 15"><path d="M0.5 1 H5 L6.5 2.8 H12.5 V11 H0.5Z" fill="#b0b0b0"/><circle cx="11.2" cy="10.5" r="3.8" fill="#19a84a"/><path d="M9 10.5 H13.4" stroke="#0f5c28" stroke-width="1.2"/></svg>
<div class="t" style="left:45.87px;top:896.00px;font-size:12.6px;color:#c4c4c4;transform:scaleX(0.999);">Scenes</div>
<svg class="a" style="left:30px;top:912.7px;" width="16" height="15" viewBox="0 0 16 15"><path d="M0.5 1 H5 L6.5 2.8 H12.5 V11 H0.5Z" fill="#b0b0b0"/><circle cx="11.2" cy="10.5" r="3.8" fill="#19a84a"/><path d="M9 10.5 H13.4" stroke="#0f5c28" stroke-width="1.2"/></svg>
<div class="t" style="left:45.87px;top:912.00px;font-size:12.6px;color:#c4c4c4;transform:scaleX(1.039);">Scripts</div>
<svg class="a" style="left:30px;top:928.7px;" width="16" height="15" viewBox="0 0 16 15"><path d="M0.5 1 H5 L6.5 2.8 H12.5 V11 H0.5Z" fill="#b0b0b0"/><rect x="7.8" y="7" width="7" height="7" fill="#19a84a"/><path d="M9 12.5 L13.5 8.3" stroke="#0f5c28" stroke-width="1.1"/></svg>
<div class="t" style="left:45.87px;top:928.00px;font-size:12.6px;color:#c4c4c4;transform:scaleX(1.044);">Settings</div>
<svg class="a" style="left:30px;top:944.7px;" width="16" height="15" viewBox="0 0 16 15"><path d="M0.5 1 H5 L6.5 2.8 H12.5 V11 H0.5Z" fill="#b0b0b0"/><circle cx="11.2" cy="10.5" r="3.8" fill="#19a84a"/><path d="M9 10.5 H13.4" stroke="#0f5c28" stroke-width="1.2"/></svg>
<div class="t" style="left:45.87px;top:944.00px;font-size:12.6px;color:#c4c4c4;transform:scaleX(1.028);">Sprites</div>
<svg class="a" style="left:17px;top:961.7px;" width="8" height="9" viewBox="0 0 8 9"><path d="M0.5 0.5 L7.5 4.5 L0.5 8.5Z" fill="#6e6e6e"/></svg>
<svg class="a" style="left:30px;top:960.7px;" width="16" height="15" viewBox="0 0 16 15"><path d="M0.5 1 H5 L6.5 2.8 H12.5 V11 H0.5Z" fill="#b0b0b0"/><circle cx="11.2" cy="10.5" r="3.8" fill="#19a84a"/><path d="M9 10.5 H13.4" stroke="#0f5c28" stroke-width="1.2"/></svg>
<div class="t" style="left:45.87px;top:960.00px;font-size:12.6px;color:#c4c4c4;transform:scaleX(1.021);">TextMesh Pro</div>
<svg class="a" style="left:2px;top:979px;" width="9" height="8" viewBox="0 0 9 8"><path d="M0.5 0.5 H8.5 L4.5 7.5Z" fill="#6e6e6e"/></svg>
<svg class="a" style="left:16px;top:976px;" width="16" height="15" viewBox="0 0 16 15"><path d="M0.5 1 H5 L6.5 2.8 H11.5 V4.5 H3 L0.5 11Z" fill="#b0b0b0"/><path d="M3.2 5.2 H13.5 L11 11 H0.8Z" fill="#b0b0b0"/></svg>
<div class="t" style="left:32.47px;top:976.00px;font-size:12.6px;color:#c8c8c8;font-weight:700;transform:scaleX(0.987);">Packages</div>
<div class="a" style="left:0;top:994px;width:194px;height:10px;overflow:hidden">
<svg class="a" style="left:17px;top:2.5px;" width="8" height="9" viewBox="0 0 8 9"><path d="M0.5 0.5 L7.5 4.5 L0.5 8.5Z" fill="#6e6e6e"/></svg>
<svg class="a" style="left:30px;top:0.5px;" width="16" height="15" viewBox="0 0 16 15"><path d="M0.5 1 H5 L6.5 2.8 H12.5 V11 H0.5Z" fill="#b0b0b0"/><circle cx="11.2" cy="10.5" r="3.8" fill="#777"/><path d="M9 10.5 H13.4" stroke="#333" stroke-width="1.2"/></svg>
<div class="t" style="left:45.87px;top:-2.00px;font-size:12.6px;color:#c4c4c4;transform:scaleX(1.010);">AI Navigation</div>
</div>
<div class="a" style="left:207.5px;top:779px;width:767.5px;height:21px;background:#333333;"></div>
<div class="t" style="left:210.37px;top:783.00px;font-size:12.6px;color:#a8a8a8;transform:scaleX(1.040);">Assets</div>
<svg class="a" style="left:256px;top:786px;" width="6" height="9" viewBox="0 0 6 9"><path d="M0.8 0.8 L4.8 4.5 L0.8 8.2" stroke="#9a9a9a" stroke-width="1.2" fill="none"/></svg>
<div class="t" style="left:266.47px;top:783.00px;font-size:12.6px;color:#c8c8c8;font-weight:700;transform:scaleX(0.958);">Resources</div>
<div class="a" style="left:207.5px;top:800px;width:767.5px;height:183px;background:#272727;"></div>
<div class="a" style="left:207.5px;top:983px;width:767.5px;height:21px;background:#333333;"></div>
<div class="a" style="left:903px;top:993px;width:55px;height:1.5px;background:#5a5a5a;"></div>
<svg class="a" style="left:930px;top:988px;" width="11" height="11" viewBox="0 0 11 11"><circle cx="5.5" cy="5.5" r="5" fill="#b8b8b8"/></svg>
<svg class="a" style="left:229px;top:814px;" width="60" height="58" viewBox="0 0 60 58"><path d="M23 2.5 L42 12 L42 34 L23 44 L4 34 L4 12Z M4 12 L23 22 L42 12 M23 22 V44" stroke="#5ab0de" stroke-width="4.2" stroke-linejoin="round" fill="none"/><rect x="27.5" y="26" width="31" height="31" fill="#272727"/><path d="M41 28.5 H38.5 Q34.5 28.5 34.5 32.5 V37.5 Q34.5 41.5 30 41.5 Q34.5 41.5 34.5 45.5 V50.5 Q34.5 54.5 38.5 54.5 H41 M45 28.5 H47.5 Q51.5 28.5 51.5 32.5 V37.5 Q51.5 41.5 56 41.5 Q51.5 41.5 51.5 45.5 V49" stroke="#e0673a" stroke-width="3.6" fill="none"/><circle cx="48" cy="50" r="7.5" fill="#1a1a1a"/><circle cx="48" cy="50" r="6.3" fill="#1fae4c"/><path d="M44.3 50 H51.7 M48 46.3 V53.7" stroke="#0b2b14" stroke-width="1.6"/></svg>
<div class="t" style="left:244.07px;top:875.00px;font-size:12.6px;color:#c4c4c4;transform:scaleX(0.915);">Belt</div>
<div class="a" style="left:300px;top:812px;width:60px;height:60px;background:#3c3c3c;"></div>
<svg class="a" style="left:344px;top:856px;" width="16" height="16" viewBox="0 0 16 16"><circle cx="8.5" cy="8" r="7.5" fill="#1a1a1a"/><circle cx="8.5" cy="8" r="6.3" fill="#1fae4c"/><path d="M4.8 8 H12.2 M8.5 4.3 V11.7" stroke="#0b2b14" stroke-width="1.6"/></svg>
<svg class="a" style="left:310px;top:875px;" width="12" height="12" viewBox="0 0 12 12"><path d="M6 0.5 L11.5 3 L11.5 9 L6 11.5 L0.5 9 L0.5 3Z" fill="#4aa8e0"/><path d="M0.5 3 L6 5.5 L11.5 3 L6 0.5Z" fill="#8fd0f5"/><path d="M6 5.5 V11.5 L0.5 9 V3Z" fill="#3a8cc8"/></svg>
<div class="t" style="left:324.67px;top:875.00px;font-size:12.6px;color:#c4c4c4;transform:scaleX(0.846);">Quad</div>
<div class="a" style="left:977px;top:734px;width:96px;height:24px;background:#323232;border-radius:4px 4px 0 0"></div>
<svg class="a" style="left:987px;top:742px;" width="12" height="10" viewBox="0 0 12 10"><path d="M0.5 1 H2 M4 1 H11.5 M2.5 5 H4 M6 5 H11.5 M2.5 9 H4 M6 9 H11.5 M1.2 1.5 V9 H2.5" stroke="#b4b4b4" stroke-width="1.1" fill="none"/></svg>
<div class="t" style="left:1002.47px;top:741.00px;font-size:12.6px;color:#b4b4b4;transform:scaleX(1.022);">Hierarchy</div>
<svg class="a" style="left:1431px;top:740px;" width="10" height="12" viewBox="0 0 10 12"><path d="M2 5.5 V3.5 Q5 0 8 3.5" stroke="#c8c8c8" stroke-width="1.2" fill="none"/><rect x="0.6" y="5.6" width="8.8" height="5.8" stroke="#c8c8c8" stroke-width="1.2" fill="none"/></svg>
<svg class="a" style="left:1452px;top:740px;" width="4" height="12" viewBox="0 0 4 12"><rect x="0.5" y="0.5" width="2.2" height="2.2" fill="#c8c8c8"/><rect x="0.5" y="4.5" width="2.2" height="2.2" fill="#c8c8c8"/><rect x="0.5" y="8.5" width="2.2" height="2.2" fill="#c8c8c8"/></svg>
<div class="a" style="left:977px;top:758px;width:489px;height:21px;background:#323232;"></div>
<div class="a" style="left:977px;top:778px;width:489px;height:1px;background:#1f1f1f;"></div>
<svg class="a" style="left:983px;top:762px;" width="13" height="13" viewBox="0 0 13 13"><path d="M6.5 0.5 V12.5 M0.5 6.5 H12.5" stroke="#c8c8c8" stroke-width="1.7"/></svg>
<svg class="a" style="left:1000px;top:766px;" width="8" height="5" viewBox="0 0 8 5"><path d="M0 0 L8 0 L4 4.5Z" fill="#c8c8c8"/></svg>
<div class="a" style="left:1137.5px;top:760px;width:325px;height:16px;background:#222222;border-radius:3px;border:1px solid #1a1a1a"></div>
<svg class="a" style="left:1141px;top:763px;" width="12" height="10" viewBox="0 0 12 10"><circle cx="3.5" cy="3.5" r="2.6" stroke="#a8a8a8" stroke-width="1.1" fill="none"/><path d="M5.5 5.5 L8 8" stroke="#a8a8a8" stroke-width="1.3"/><path d="M8 3 H11.5 L9.75 5Z" fill="#a8a8a8"/></svg>
<div class="t" style="left:1155.87px;top:763.00px;font-size:12.6px;color:#6a6a6a;transform:scaleX(0.950);">All</div>
<svg class="a" style="left:1447px;top:761px;" width="14" height="14" viewBox="0 0 14 14"><rect x="4.5" y="0.6" width="8.9" height="8.9" stroke="#c0c0c0" stroke-width="1.1" fill="none"/><rect x="0.6" y="8.5" width="5" height="5" stroke="#c0c0c0" stroke-width="1.1" fill="#222"/><path d="M6.5 7.5 L11 3 M8 3 H11 V6" stroke="#c0c0c0" stroke-width="1.1" fill="none"/></svg>
<div class="a" style="left:977px;top:779px;width:489px;height:225px;background:#2c2c2c;"></div>
<div class="a" style="left:977px;top:794px;width:32px;height:210px;background:#282828;"></div>
<div class="a" style="left:977px;top:778px;width:489px;height:16px;background:#262626;"></div>
<div class="a" style="left:977px;top:939px;width:489px;height:15px;background:#242424;"></div>
<div class="a" style="left:977px;top:954px;width:489px;height:1px;background:#383838;"></div>
<div class="a" style="left:977px;top:842.5px;width:32px;height:16px;background:#333333;"></div>
<div class="a" style="left:1009px;top:842.5px;width:457px;height:16px;background:#3a3a3a;"></div>
<svg class="a" style="left:1011px;top:783.5px;" width="9" height="8" viewBox="0 0 9 8"><path d="M0.5 0.5 H8.5 L4.5 7.5Z" fill="#777"/></svg>
<svg class="a" style="left:1025px;top:779px;" width="16" height="16" viewBox="0 0 16 16"><path d="M7 0.5 L13 3.8 V10.2 L7 13.5 L1 10.2 V3.8Z" fill="#d8d8d8"/><path d="M7 3 V7 M7 7 L3.5 9 M7 7 L10.5 9" stroke="#262626" stroke-width="2"/><path d="M5.3 2 L7 0.5 L8.7 2" fill="#262626"/><circle cx="11" cy="11.5" r="3.8" fill="#19a84a"/><path d="M8.8 11.5 H13.2" stroke="#0f5c28" stroke-width="1.2"/></svg>
<div class="t" style="left:1041.27px;top:781.00px;font-size:12.6px;color:#cfcfcf;font-weight:700;transform:scaleX(0.983);">SampleScene</div>
<svg class="a" style="left:1452px;top:780px;" width="4" height="12" viewBox="0 0 4 12"><rect x="0.5" y="0.5" width="2.2" height="2.2" fill="#c8c8c8"/><rect x="0.5" y="4.5" width="2.2" height="2.2" fill="#c8c8c8"/><rect x="0.5" y="8.5" width="2.2" height="2.2" fill="#c8c8c8"/></svg>
<svg class="a" style="left:1026px;top:798.9px;" width="8" height="9" viewBox="0 0 8 9"><path d="M0.5 0.5 L7.5 4.5 L0.5 8.5Z" fill="#6e6e6e"/></svg>
<svg class="a" style="left:1037.5px;top:795.4px;" width="15" height="15" viewBox="0 0 15 15"><path d="M7 0.7 L13.3 3.8 V10.7 L7 13.8 L0.7 10.7 V3.8Z M0.7 3.8 L7 7 L13.3 3.8 M7 7 V13.8" stroke="#c0c0c0" stroke-width="1.1" fill="none"/></svg>
<div class="t" style="left:1054.87px;top:797.00px;font-size:12.6px;color:#c4c4c4;transform:scaleX(1.006);">GeneralObjects</div>
<svg class="a" style="left:1025px;top:815.4px;" width="9" height="8" viewBox="0 0 9 8"><path d="M0.5 0.5 H8.5 L4.5 7.5Z" fill="#6e6e6e"/></svg>
<svg class="a" style="left:1037.5px;top:811.4px;" width="15" height="15" viewBox="0 0 15 15"><path d="M7 0.7 L13.3 3.8 V10.7 L7 13.8 L0.7 10.7 V3.8Z M0.7 3.8 L7 7 L13.3 3.8 M7 7 V13.8" stroke="#c0c0c0" stroke-width="1.1" fill="none"/></svg>
<div class="t" style="left:1054.87px;top:813.00px;font-size:12.6px;color:#c4c4c4;transform:scaleX(1.015);">FunctionalObjects</div>
<svg class="a" style="left:1040px;top:830.9px;" width="8" height="9" viewBox="0 0 8 9"><path d="M0.5 0.5 L7.5 4.5 L0.5 8.5Z" fill="#6e6e6e"/></svg>
<svg class="a" style="left:1051.5px;top:827.4px;" width="15" height="15" viewBox="0 0 15 15"><path d="M7 0.7 L13.3 3.8 V10.7 L7 13.8 L0.7 10.7 V3.8Z M0.7 3.8 L7 7 L13.3 3.8 M7 7 V13.8" stroke="#c0c0c0" stroke-width="1.1" fill="none"/></svg>
<div class="t" style="left:1068.87px;top:829.00px;font-size:12.6px;color:#c4c4c4;transform:scaleX(0.997);">UI</div>
<svg class="a" style="left:1051.5px;top:843.4px;" width="15" height="15" viewBox="0 0 15 15"><path d="M7 0.7 L13.3 3.8 V10.7 L7 13.8 L0.7 10.7 V3.8Z M0.7 3.8 L7 7 L13.3 3.8 M7 7 V13.8" stroke="#c0c0c0" stroke-width="1.1" fill="none"/></svg>
<div class="t" style="left:1068.87px;top:845.00px;font-size:12.6px;color:#c4c4c4;transform:scaleX(1.009);">PlayerInventory</div>
<svg class="a" style="left:1040px;top:862.9px;" width="8" height="9" viewBox="0 0 8 9"><path d="M0.5 0.5 L7.5 4.5 L0.5 8.5Z" fill="#6e6e6e"/></svg>
<svg class="a" style="left:1051.5px;top:859.4px;" width="15" height="15" viewBox="0 0 15 15"><path d="M7 0.7 L13.3 3.8 V10.7 L7 13.8 L0.7 10.7 V3.8Z M0.7 3.8 L7 7 L13.3 3.8 M7 7 V13.8" stroke="#c0c0c0" stroke-width="1.1" fill="none"/></svg>
<div class="t" style="left:1068.87px;top:861.00px;font-size:12.6px;color:#c4c4c4;transform:scaleX(1.006);">GridMap</div>
<svg class="a" style="left:1026px;top:878.9px;" width="8" height="9" viewBox="0 0 8 9"><path d="M0.5 0.5 L7.5 4.5 L0.5 8.5Z" fill="#6e6e6e"/></svg>
<svg class="a" style="left:1037.5px;top:875.4px;" width="15" height="15" viewBox="0 0 15 15"><path d="M7 0.7 L13.3 3.8 V10.7 L7 13.8 L0.7 10.7 V3.8Z M0.7 3.8 L7 7 L13.3 3.8 M7 7 V13.8" stroke="#c0c0c0" stroke-width="1.1" fill="none"/></svg>
<div class="t" style="left:1054.87px;top:877.00px;font-size:12.6px;color:#c4c4c4;transform:scaleX(1.008);">BeltPrefab(Clone)</div>
<svg class="a" style="left:1026px;top:894.9px;" width="8" height="9" viewBox="0 0 8 9"><path d="M0.5 0.5 L7.5 4.5 L0.5 8.5Z" fill="#6e6e6e"/></svg>
<svg class="a" style="left:1037.5px;top:891.4px;" width="15" height="15" viewBox="0 0 15 15"><path d="M7 0.7 L13.3 3.8 V10.7 L7 13.8 L0.7 10.7 V3.8Z M0.7 3.8 L7 7 L13.3 3.8 M7 7 V13.8" stroke="#c0c0c0" stroke-width="1.1" fill="none"/></svg>
<div class="t" style="left:1054.87px;top:893.00px;font-size:12.6px;color:#c4c4c4;transform:scaleX(1.008);">BeltPrefab(Clone)</div>
<svg class="a" style="left:1026px;top:910.9px;" width="8" height="9" viewBox="0 0 8 9"><path d="M0.5 0.5 L7.5 4.5 L0.5 8.5Z" fill="#6e6e6e"/></svg>
<svg class="a" style="left:1037.5px;top:907.4px;" width="15" height="15" viewBox="0 0 15 15"><path d="M7 0.7 L13.3 3.8 V10.7 L7 13.8 L0.7 10.7 V3.8Z M0.7 3.8 L7 7 L13.3 3.8 M7 7 V13.8" stroke="#6e6e6e" stroke-width="1.1" fill="none"/></svg>
<div class="t" style="left:1054.87px;top:909.00px;font-size:12.6px;color:#6e6e6e;transform:scaleX(1.008);">BeltPrefab(Clone)</div>
<svg class="a" style="left:1026px;top:926.9px;" width="8" height="9" viewBox="0 0 8 9"><path d="M0.5 0.5 L7.5 4.5 L0.5 8.5Z" fill="#6e6e6e"/></svg>
<svg class="a" style="left:1037.5px;top:923.4px;" width="15" height="15" viewBox="0 0 15 15"><path d="M7 0.7 L13.3 3.8 V10.7 L7 13.8 L0.7 10.7 V3.8Z M0.7 3.8 L7 7 L13.3 3.8 M7 7 V13.8" stroke="#c0c0c0" stroke-width="1.1" fill="none"/></svg>
<div class="t" style="left:1054.87px;top:925.00px;font-size:12.6px;color:#c4c4c4;transform:scaleX(1.008);">BeltPrefab(Clone)</div>
<svg class="a" style="left:1011px;top:943px;" width="8" height="9" viewBox="0 0 8 9"><path d="M0.5 0.5 L7.5 4.5 L0.5 8.5Z" fill="#6e6e6e"/></svg>
<svg class="a" style="left:1025px;top:940px;" width="16" height="16" viewBox="0 0 16 16"><path d="M7 0.5 L13 3.8 V10.2 L7 13.5 L1 10.2 V3.8Z" fill="#d8d8d8"/><path d="M7 3 V7 M7 7 L3.5 9 M7 7 L10.5 9" stroke="#262626" stroke-width="2"/><path d="M5.3 2 L7 0.5 L8.7 2" fill="#262626"/></svg>
<div class="t" style="left:1040.77px;top:941.00px;font-size:12.6px;color:#c4c4c4;transform:scaleX(1.014);">DontDestroyOnLoad</div>
<svg class="a" style="left:1452px;top:941px;" width="4" height="12" viewBox="0 0 4 12"><rect x="0.5" y="0.5" width="2.2" height="2.2" fill="#c8c8c8"/><rect x="0.5" y="4.5" width="2.2" height="2.2" fill="#c8c8c8"/><rect x="0.5" y="8.5" width="2.2" height="2.2" fill="#c8c8c8"/></svg>
<div class="a" style="left:1838px;top:1006px;width:1px;height:19px;background:#222222;"></div>
<div class="a" style="left:1865px;top:1006px;width:1px;height:19px;background:#222222;"></div>
<div class="a" style="left:1891.5px;top:1006px;width:1px;height:19px;background:#222222;"></div>
<svg class="a" style="left:1843px;top:1008px;" width="17" height="16" viewBox="0 0 17 16"><ellipse cx="8.5" cy="9.5" rx="5" ry="5.8" fill="#b4b4b4"/><circle cx="8.5" cy="3.5" r="2.6" fill="#b4b4b4"/><path d="M2 6 L4 8 M15 5 L13 8 M1.5 10.5 H4 M15.5 10.5 H13 M2.5 15 L4.5 13 M14.5 15 L12.5 13" stroke="#b4b4b4" stroke-width="1.2"/><path d="M1.5 1 L15.5 15" stroke="#111" stroke-width="1.6"/></svg>
<svg class="a" style="left:1871px;top:1008px;" width="15" height="16" viewBox="0 0 15 16"><ellipse cx="7.5" cy="3.8" rx="6" ry="3" fill="#b4b4b4"/><path d="M1.5 6.5 Q7.5 10 13.5 6.5 V9 Q7.5 12.5 1.5 9Z M1.5 11 Q7.5 14.5 13.5 11 V12.5 Q7.5 16 1.5 12.5Z" fill="#b4b4b4"/><path d="M0.5 1 L14.5 15" stroke="#111" stroke-width="1.6"/></svg>
<svg class="a" style="left:1896px;top:1008px;" width="16" height="16" viewBox="0 0 16 16"><circle cx="8" cy="7.5" r="6.8" stroke="#b4b4b4" stroke-width="1.1" fill="none"/><path d="M4.5 7.5 L7 10 L11.5 5" stroke="#b4b4b4" stroke-width="1.5" fill="none"/></svg>
</body></html>
